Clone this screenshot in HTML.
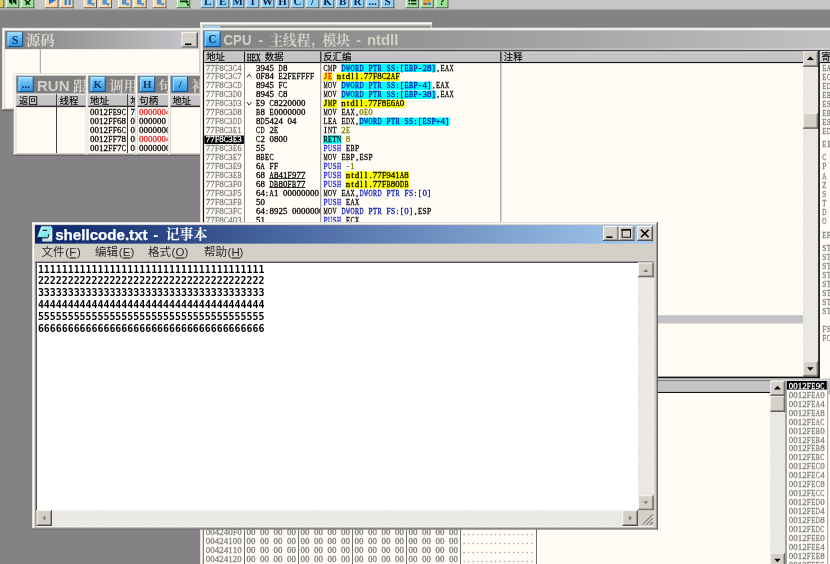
<!DOCTYPE html>
<html lang="zh-CN"><head><meta charset="utf-8"><title>OllyDbg - shellcode.txt</title>
<style>
html,body{margin:0;padding:0;background:#848284;overflow:hidden}
svg{display:block}
text{white-space:pre}
.t{font-family:"Liberation Serif","DejaVu Serif",serif}
.ib{font-family:"Liberation Serif","DejaVu Serif",serif;font-weight:bold}
.m{font-family:"Liberation Mono","DejaVu Sans Mono",monospace}
.mb{font-family:"DejaVu Sans Mono","Liberation Mono",monospace;font-weight:bold}
.s{font-family:"Liberation Sans","Noto Sans CJK SC",sans-serif}
.sb{font-family:"Liberation Sans","Noto Sans CJK SC",sans-serif;font-weight:bold}
.cs{font-family:"Liberation Serif","Noto Serif CJK SC",serif;font-weight:bold}
.ch{font-family:"Liberation Sans","Noto Sans CJK SC",sans-serif;stroke:#000;stroke-width:0.1px}
.cg{font-family:"Liberation Sans","Noto Sans CJK SC",sans-serif}
</style></head><body>
<svg width="830" height="564" viewBox="0 0 830 564">
<defs>
<linearGradient id="ic" x1="0" y1="0" x2="0" y2="1"><stop offset="0" stop-color="#9adcff"/><stop offset="0.5" stop-color="#58b4f0"/><stop offset="1" stop-color="#2f8fd8"/></linearGradient>
<linearGradient id="gs" x1="5" x2="199" y1="0" y2="0" gradientUnits="userSpaceOnUse"><stop offset="0" stop-color="#808080"/><stop offset="1" stop-color="#c8c8cc"/></linearGradient>
<linearGradient id="gc" x1="203" x2="860" y1="0" y2="0" gradientUnits="userSpaceOnUse"><stop offset="0" stop-color="#808080"/><stop offset="1" stop-color="#c4c4c4"/></linearGradient>
<linearGradient id="np" x1="0" y1="0" x2="1" y2="1"><stop offset="0" stop-color="#d8ffff"/><stop offset="0.5" stop-color="#8ceef0"/><stop offset="1" stop-color="#5cdce4"/></linearGradient>
<linearGradient id="gn" x1="35" x2="654" y1="0" y2="0" gradientUnits="userSpaceOnUse"><stop offset="0" stop-color="#0a246a"/><stop offset="1" stop-color="#a6caf0"/></linearGradient>
<pattern id="dith" width="1.49" height="1.49" patternUnits="userSpaceOnUse"><rect width="1.49" height="1.49" fill="#dbd8d1"/><rect width="0.745" height="0.745" fill="#f8f7f5"/><rect x="0.745" y="0.745" width="0.745" height="0.745" fill="#f8f7f5"/></pattern>
<pattern id="dith2" width="1.49" height="1.49" patternUnits="userSpaceOnUse"><rect width="1.49" height="1.49" fill="#dcd9d2"/><rect width="0.745" height="0.745" fill="#f9f8f6"/><rect x="0.745" y="0.745" width="0.745" height="0.745" fill="#f9f8f6"/></pattern>
<filter id="soft" x="0" y="0" width="1" height="1" filterUnits="objectBoundingBox" color-interpolation-filters="sRGB"><feGaussianBlur stdDeviation="0.35"/></filter>
</defs>
<g filter="url(#soft)">
<rect x="0" y="0" width="830" height="564" fill="#848284"/>
<rect x="0" y="0" width="830" height="9.4" fill="#c6c6c6"/>
<rect x="0" y="9" width="830" height="0.8" fill="#a8a8a8"/>
<rect x="0" y="9.8" width="830" height="0.9" fill="#8e8e8e"/>
<rect x="-9" y="0" width="13.3" height="8.2" fill="#d6d060"/>
<rect x="-9" y="0" width="0.9" height="7.4" fill="#fff"/>
<rect x="-9" y="7.3" width="13.3" height="0.9" fill="#505050"/>
<rect x="3.4" y="0" width="0.9" height="8.2" fill="#505050"/>
<rect x="6" y="0" width="13.3" height="8.2" fill="#9ee29a"/>
<rect x="6" y="0" width="0.9" height="7.4" fill="#fff"/>
<rect x="6" y="7.3" width="13.3" height="0.9" fill="#505050"/>
<rect x="18.4" y="0" width="0.9" height="8.2" fill="#505050"/>
<rect x="21" y="0" width="13.3" height="8.2" fill="#9ee29a"/>
<rect x="21" y="0" width="0.9" height="7.4" fill="#fff"/>
<rect x="21" y="7.3" width="13.3" height="0.9" fill="#505050"/>
<rect x="33.4" y="0" width="0.9" height="8.2" fill="#505050"/>
<path d="M9 0 L9 2 L12.4 5 L12.4 0 Z M13 0 L13 2 L16.4 5 L16.4 0 Z" fill="#0a280a"/>
<path d="M25 0 L29.6 4.6 M30.4 0 L25.6 4.6" stroke="#0a280a" stroke-width="1.5"/>
<rect x="45.2" y="0" width="13.3" height="8.2" fill="#f8d8a8"/>
<rect x="45.2" y="0" width="0.9" height="7.4" fill="#fff"/>
<rect x="45.2" y="7.3" width="13.3" height="0.9" fill="#505050"/>
<rect x="57.6" y="0" width="0.9" height="8.2" fill="#505050"/>
<rect x="60.2" y="0" width="13.3" height="8.2" fill="#f8d8a8"/>
<rect x="60.2" y="0" width="0.9" height="7.4" fill="#fff"/>
<rect x="60.2" y="7.3" width="13.3" height="0.9" fill="#505050"/>
<rect x="72.6" y="0" width="0.9" height="8.2" fill="#505050"/>
<rect x="83.7" y="0" width="13.3" height="8.2" fill="#f8d8a8"/>
<rect x="83.7" y="0" width="0.9" height="7.4" fill="#fff"/>
<rect x="83.7" y="7.3" width="13.3" height="0.9" fill="#505050"/>
<rect x="96.1" y="0" width="0.9" height="8.2" fill="#505050"/>
<rect x="98.7" y="0" width="13.3" height="8.2" fill="#f8d8a8"/>
<rect x="98.7" y="0" width="0.9" height="7.4" fill="#fff"/>
<rect x="98.7" y="7.3" width="13.3" height="0.9" fill="#505050"/>
<rect x="111.1" y="0" width="0.9" height="8.2" fill="#505050"/>
<rect x="118.2" y="0" width="13.3" height="8.2" fill="#f8d8a8"/>
<rect x="118.2" y="0" width="0.9" height="7.4" fill="#fff"/>
<rect x="118.2" y="7.3" width="13.3" height="0.9" fill="#505050"/>
<rect x="130.6" y="0" width="0.9" height="8.2" fill="#505050"/>
<rect x="133.3" y="0" width="13.3" height="8.2" fill="#f8d8a8"/>
<rect x="133.3" y="0" width="0.9" height="7.4" fill="#fff"/>
<rect x="133.3" y="7.3" width="13.3" height="0.9" fill="#505050"/>
<rect x="145.7" y="0" width="0.9" height="8.2" fill="#505050"/>
<rect x="153.1" y="0" width="13.3" height="8.2" fill="#f8d8a8"/>
<rect x="153.1" y="0" width="0.9" height="7.4" fill="#fff"/>
<rect x="153.1" y="7.3" width="13.3" height="0.9" fill="#505050"/>
<rect x="165.5" y="0" width="0.9" height="8.2" fill="#505050"/>
<path d="M49 0 L49 4.2 L55.6 0.4 L55.6 0 Z" fill="#1a78d8"/>
<path d="M64.6 0 h2.2 v5 h-2.2 Z M68.6 0 h2.2 v5 h-2.2 Z" fill="#2a86dc"/>
<path d="M87.5 0 h4.4 v3 h2.6 v2.4 h-2.6 v-1 h-4.4 Z" fill="#2f8ade" opacity="0.85"/>
<path d="M102.5 0 h4.4 v3 h2.6 v2.4 h-2.6 v-1 h-4.4 Z" fill="#2f8ade" opacity="0.85"/>
<path d="M122 0 h4.4 v3 h2.6 v2.4 h-2.6 v-1 h-4.4 Z" fill="#2f8ade" opacity="0.85"/>
<path d="M137 0 h4.4 v3 h2.6 v2.4 h-2.6 v-1 h-4.4 Z" fill="#2f8ade" opacity="0.85"/>
<path d="M157 0 h4.4 v3 h2.6 v2.4 h-2.6 v-1 h-4.4 Z" fill="#2f8ade" opacity="0.85"/>
<rect x="176.9" y="0" width="13.3" height="8.2" fill="#9ee29a"/>
<rect x="176.9" y="0" width="0.9" height="7.4" fill="#fff"/>
<rect x="176.9" y="7.3" width="13.3" height="0.9" fill="#505050"/>
<rect x="189.3" y="0" width="0.9" height="8.2" fill="#505050"/>
<path d="M180 0.4 h6 v-0.4 l3 1.6 l-3 2 v-1.4 h-6 Z M187 3.4 h1.8 v2.4 h-1.8 Z" fill="#0a280a"/>
<rect x="201" y="0" width="13.3" height="8.2" fill="#94d2f6"/>
<rect x="201" y="0" width="0.9" height="7.4" fill="#e8f8ff"/>
<rect x="201" y="7.3" width="13.3" height="0.9" fill="#505050"/>
<rect x="213.4" y="0" width="0.9" height="8.2" fill="#505050"/>
<text x="207.6" y="4.8" font-size="11" fill="#0c2448" class="ib" text-anchor="middle">L</text>
<rect x="216" y="0" width="13.3" height="8.2" fill="#94d2f6"/>
<rect x="216" y="0" width="0.9" height="7.4" fill="#e8f8ff"/>
<rect x="216" y="7.3" width="13.3" height="0.9" fill="#505050"/>
<rect x="228.4" y="0" width="0.9" height="8.2" fill="#505050"/>
<text x="222.6" y="4.8" font-size="11" fill="#0c2448" class="ib" text-anchor="middle">E</text>
<rect x="231" y="0" width="13.3" height="8.2" fill="#94d2f6"/>
<rect x="231" y="0" width="0.9" height="7.4" fill="#e8f8ff"/>
<rect x="231" y="7.3" width="13.3" height="0.9" fill="#505050"/>
<rect x="243.4" y="0" width="0.9" height="8.2" fill="#505050"/>
<text x="237.6" y="4.8" font-size="11" fill="#0c2448" class="ib" text-anchor="middle">M</text>
<rect x="246" y="0" width="13.3" height="8.2" fill="#94d2f6"/>
<rect x="246" y="0" width="0.9" height="7.4" fill="#e8f8ff"/>
<rect x="246" y="7.3" width="13.3" height="0.9" fill="#505050"/>
<rect x="258.4" y="0" width="0.9" height="8.2" fill="#505050"/>
<text x="252.6" y="4.8" font-size="11" fill="#0c2448" class="ib" text-anchor="middle">T</text>
<rect x="261" y="0" width="13.3" height="8.2" fill="#94d2f6"/>
<rect x="261" y="0" width="0.9" height="7.4" fill="#e8f8ff"/>
<rect x="261" y="7.3" width="13.3" height="0.9" fill="#505050"/>
<rect x="273.4" y="0" width="0.9" height="8.2" fill="#505050"/>
<text x="267.6" y="4.8" font-size="11" fill="#0c2448" class="ib" text-anchor="middle">W</text>
<rect x="276" y="0" width="13.3" height="8.2" fill="#94d2f6"/>
<rect x="276" y="0" width="0.9" height="7.4" fill="#e8f8ff"/>
<rect x="276" y="7.3" width="13.3" height="0.9" fill="#505050"/>
<rect x="288.4" y="0" width="0.9" height="8.2" fill="#505050"/>
<text x="282.6" y="4.8" font-size="11" fill="#0c2448" class="ib" text-anchor="middle">H</text>
<rect x="291" y="0" width="13.3" height="8.2" fill="#94d2f6"/>
<rect x="291" y="0" width="0.9" height="7.4" fill="#e8f8ff"/>
<rect x="291" y="7.3" width="13.3" height="0.9" fill="#505050"/>
<rect x="303.4" y="0" width="0.9" height="8.2" fill="#505050"/>
<text x="297.6" y="4.8" font-size="11" fill="#0c2448" class="ib" text-anchor="middle">C</text>
<rect x="306" y="0" width="13.3" height="8.2" fill="#94d2f6"/>
<rect x="306" y="0" width="0.9" height="7.4" fill="#e8f8ff"/>
<rect x="306" y="7.3" width="13.3" height="0.9" fill="#505050"/>
<rect x="318.4" y="0" width="0.9" height="8.2" fill="#505050"/>
<text x="312.6" y="4.8" font-size="11" fill="#0c2448" class="ib" text-anchor="middle">/</text>
<rect x="321" y="0" width="13.3" height="8.2" fill="#94d2f6"/>
<rect x="321" y="0" width="0.9" height="7.4" fill="#e8f8ff"/>
<rect x="321" y="7.3" width="13.3" height="0.9" fill="#505050"/>
<rect x="333.4" y="0" width="0.9" height="8.2" fill="#505050"/>
<text x="327.6" y="4.8" font-size="11" fill="#0c2448" class="ib" text-anchor="middle">K</text>
<rect x="336" y="0" width="13.3" height="8.2" fill="#94d2f6"/>
<rect x="336" y="0" width="0.9" height="7.4" fill="#e8f8ff"/>
<rect x="336" y="7.3" width="13.3" height="0.9" fill="#505050"/>
<rect x="348.4" y="0" width="0.9" height="8.2" fill="#505050"/>
<text x="342.6" y="4.8" font-size="11" fill="#0c2448" class="ib" text-anchor="middle">B</text>
<rect x="351" y="0" width="13.3" height="8.2" fill="#94d2f6"/>
<rect x="351" y="0" width="0.9" height="7.4" fill="#e8f8ff"/>
<rect x="351" y="7.3" width="13.3" height="0.9" fill="#505050"/>
<rect x="363.4" y="0" width="0.9" height="8.2" fill="#505050"/>
<text x="357.6" y="4.8" font-size="11" fill="#0c2448" class="ib" text-anchor="middle">R</text>
<rect x="366" y="0" width="13.3" height="8.2" fill="#94d2f6"/>
<rect x="366" y="0" width="0.9" height="7.4" fill="#e8f8ff"/>
<rect x="366" y="7.3" width="13.3" height="0.9" fill="#505050"/>
<rect x="378.4" y="0" width="0.9" height="8.2" fill="#505050"/>
<text x="372.6" y="4.8" font-size="11" fill="#0c2448" class="ib" text-anchor="middle">...</text>
<rect x="381" y="0" width="13.3" height="8.2" fill="#94d2f6"/>
<rect x="381" y="0" width="0.9" height="7.4" fill="#e8f8ff"/>
<rect x="381" y="7.3" width="13.3" height="0.9" fill="#505050"/>
<rect x="393.4" y="0" width="0.9" height="8.2" fill="#505050"/>
<text x="387.6" y="4.8" font-size="11" fill="#0c2448" class="ib" text-anchor="middle">S</text>
<rect x="405.8" y="0" width="13" height="8.2" fill="#9ee29a"/>
<rect x="405.8" y="0" width="0.9" height="7.4" fill="#fff"/>
<rect x="405.8" y="7.3" width="13" height="0.9" fill="#505050"/>
<rect x="417.9" y="0" width="0.9" height="8.2" fill="#505050"/>
<rect x="420.7" y="0" width="13" height="8.2" fill="#9ee29a"/>
<rect x="420.7" y="0" width="0.9" height="7.4" fill="#fff"/>
<rect x="420.7" y="7.3" width="13" height="0.9" fill="#505050"/>
<rect x="432.8" y="0" width="0.9" height="8.2" fill="#505050"/>
<rect x="435.4" y="0" width="13" height="8.2" fill="#9ee29a"/>
<rect x="435.4" y="0" width="0.9" height="7.4" fill="#fff"/>
<rect x="435.4" y="7.3" width="13" height="0.9" fill="#505050"/>
<rect x="447.5" y="0" width="0.9" height="8.2" fill="#505050"/>
<path d="M408.4 0 h1.8 v1.4 h-1.8 Z M411 0 h5.4 v1.4 h-5.4 Z M408.4 3 h1.8 v1.6 h-1.8 Z M411 3 h5.4 v1.6 h-5.4 Z" fill="#0a280a"/>
<path d="M423.4 0 h7.6 v2 h-7.6 Z" fill="#e8a040"/><path d="M423.4 2.6 h3.4 v2.4 h-3.4 Z" fill="#d04030"/><path d="M427.4 2.6 h3.6 v2.4 h-3.6 Z" fill="#4080d0"/>
<text x="441.9" y="4.9" font-size="11" fill="#0a280a" class="ib" text-anchor="middle">?</text>
<rect x="2" y="27.8" width="215" height="83" fill="#d4d0c8"/>
<rect x="2.7" y="28.5" width="213.6" height="1.4" fill="#fbfbfb"/>
<rect x="2.7" y="28.5" width="1.4" height="81.6" fill="#fbfbfb"/>
<rect x="2" y="110" width="215" height="0.8" fill="#404040"/>
<rect x="216.2" y="27.8" width="0.8" height="83" fill="#404040"/>
<rect x="2.8" y="109.2" width="213.4" height="0.8" fill="#808080"/>
<rect x="215.4" y="28.6" width="0.8" height="81.4" fill="#808080"/>
<rect x="5" y="31" width="194" height="18.3" fill="url(#gs)"/>
<rect x="7" y="32" width="16" height="15" rx="1" fill="url(#ic)" stroke="#2a7fc0" stroke-width="0.6"/>
<rect x="7.6" y="32.6" width="14.8" height="0.9" fill="#c8ecff"/>
<rect x="7.6" y="32.6" width="0.9" height="13.8" fill="#a8dcff"/>
<rect x="7.3" y="46" width="15.7" height="1" fill="#1c5088"/>
<rect x="22" y="32.3" width="1" height="14.7" fill="#1c5088"/>
<text x="15" y="43.82" font-size="12" fill="#123a68" class="ib" text-anchor="middle">S</text>
<text x="26" y="45.4" font-size="13.6" fill="#dcd8d0" class="cs" textLength="28.6" lengthAdjust="spacingAndGlyphs">源码</text>
<rect x="181.6" y="32.3" width="16.2" height="15.2" fill="#d4d0c8"/>
<rect x="181.6" y="32.3" width="16.2" height="0.8" fill="#fff"/>
<rect x="181.6" y="32.3" width="0.8" height="15.2" fill="#fff"/>
<rect x="181.6" y="46.7" width="16.2" height="0.8" fill="#404040"/>
<rect x="197" y="32.3" width="0.8" height="15.2" fill="#404040"/>
<rect x="182.4" y="45.9" width="14.6" height="0.8" fill="#808080"/>
<rect x="196.2" y="33.1" width="0.8" height="13.6" fill="#808080"/>
<rect x="185" y="43.5" width="6.4" height="1.6" fill="#000"/>
<rect x="5" y="49.3" width="194" height="58.8" fill="#fffcf6"/>
<rect x="39.8" y="49.3" width="1" height="58.8" fill="#a0a0a0"/>
<rect x="13.5" y="73" width="90" height="83" fill="#d4d0c8"/>
<rect x="14.2" y="73.7" width="88.6" height="1.4" fill="#fbfbfb"/>
<rect x="14.2" y="73.7" width="1.4" height="81.6" fill="#fbfbfb"/>
<rect x="13.5" y="155.2" width="90" height="0.8" fill="#404040"/>
<rect x="102.7" y="73" width="0.8" height="83" fill="#404040"/>
<rect x="14.3" y="154.4" width="88.4" height="0.8" fill="#808080"/>
<rect x="101.9" y="73.8" width="0.8" height="81.4" fill="#808080"/>
<rect x="16.2" y="75.9" width="84.8" height="17.8" fill="#808080"/>
<rect x="18.1" y="76.6" width="15.6" height="15.4" rx="1" fill="url(#ic)" stroke="#2a7fc0" stroke-width="0.6"/>
<rect x="18.7" y="77.2" width="14.4" height="0.9" fill="#c8ecff"/>
<rect x="18.7" y="77.2" width="0.9" height="14.2" fill="#a8dcff"/>
<rect x="18.4" y="91" width="15.3" height="1" fill="#1c5088"/>
<rect x="32.7" y="76.9" width="1" height="15.1" fill="#1c5088"/>
<text x="25.9" y="88.26" font-size="11" fill="#123a68" class="ib" text-anchor="middle">...</text>
<g clip-path="url(#c13)">
<clipPath id="c13"><rect x="16.2" y="73" width="84.8" height="82"/></clipPath>
<text x="37" y="90.6" font-size="15" fill="#d4d0c8" class="sb">RUN</text>
<text x="73" y="90.6" font-size="14" fill="#d4d0c8" class="cs">跟</text>
<rect x="16.2" y="93.7" width="84.8" height="12.5" fill="#c6c3c6"/>
<rect x="16.2" y="93.7" width="84.8" height="1.6" fill="#e4e2e4"/>
<rect x="16.2" y="106.9" width="84.8" height="46.1" fill="#fffcf6"/>
<rect x="16.2" y="105.6" width="84.8" height="1.5" fill="#303030"/>
<text x="19" y="104.3" font-size="9.4" fill="#000" class="ch">返回</text>
<text x="59.5" y="104.3" font-size="9.4" fill="#000" class="ch">线程</text>
<rect x="56" y="94.2" width="1" height="58.8" fill="#404040"/>
</g>
<rect x="85.5" y="73" width="70" height="83" fill="#d4d0c8"/>
<rect x="86.2" y="73.7" width="68.6" height="1.4" fill="#fbfbfb"/>
<rect x="86.2" y="73.7" width="1.4" height="81.6" fill="#fbfbfb"/>
<rect x="85.5" y="155.2" width="70" height="0.8" fill="#404040"/>
<rect x="154.7" y="73" width="0.8" height="83" fill="#404040"/>
<rect x="86.3" y="154.4" width="68.4" height="0.8" fill="#808080"/>
<rect x="153.9" y="73.8" width="0.8" height="81.4" fill="#808080"/>
<rect x="88.2" y="75.9" width="64.8" height="17.8" fill="#808080"/>
<rect x="90.1" y="76.6" width="15.6" height="15.4" rx="1" fill="url(#ic)" stroke="#2a7fc0" stroke-width="0.6"/>
<rect x="90.7" y="77.2" width="14.4" height="0.9" fill="#c8ecff"/>
<rect x="90.7" y="77.2" width="0.9" height="14.2" fill="#a8dcff"/>
<rect x="90.4" y="91" width="15.3" height="1" fill="#1c5088"/>
<rect x="104.7" y="76.9" width="1" height="15.1" fill="#1c5088"/>
<text x="97.9" y="88.26" font-size="11" fill="#123a68" class="ib" text-anchor="middle">K</text>
<g clip-path="url(#c85)">
<clipPath id="c85"><rect x="88.2" y="73" width="64.8" height="82"/></clipPath>
<text x="109.5" y="90.6" font-size="14" fill="#d4d0c8" class="cs">调用</text>
<rect x="88.2" y="93.7" width="64.8" height="12.5" fill="#c6c3c6"/>
<rect x="88.2" y="93.7" width="64.8" height="1.6" fill="#e4e2e4"/>
<rect x="88.2" y="106.9" width="64.8" height="46.1" fill="#fffcf6"/>
<rect x="88.2" y="105.6" width="64.8" height="1.5" fill="#303030"/>
<text x="90" y="104.3" font-size="9.4" fill="#000" class="ch">地址</text>
<text x="130.5" y="104.3" font-size="9.4" fill="#000" class="ch">堆</text>
<rect x="127" y="94.2" width="1" height="58.8" fill="#404040"/>
</g>
<rect x="135" y="73" width="50" height="83" fill="#d4d0c8"/>
<rect x="135.7" y="73.7" width="48.6" height="1.4" fill="#fbfbfb"/>
<rect x="135.7" y="73.7" width="1.4" height="81.6" fill="#fbfbfb"/>
<rect x="135" y="155.2" width="50" height="0.8" fill="#404040"/>
<rect x="184.2" y="73" width="0.8" height="83" fill="#404040"/>
<rect x="135.8" y="154.4" width="48.4" height="0.8" fill="#808080"/>
<rect x="183.4" y="73.8" width="0.8" height="81.4" fill="#808080"/>
<rect x="137.7" y="75.9" width="44.8" height="17.8" fill="#808080"/>
<rect x="139.6" y="76.6" width="15.6" height="15.4" rx="1" fill="url(#ic)" stroke="#2a7fc0" stroke-width="0.6"/>
<rect x="140.2" y="77.2" width="14.4" height="0.9" fill="#c8ecff"/>
<rect x="140.2" y="77.2" width="0.9" height="14.2" fill="#a8dcff"/>
<rect x="139.9" y="91" width="15.3" height="1" fill="#1c5088"/>
<rect x="154.2" y="76.9" width="1" height="15.1" fill="#1c5088"/>
<text x="147.4" y="88.26" font-size="11" fill="#123a68" class="ib" text-anchor="middle">H</text>
<g clip-path="url(#c135)">
<clipPath id="c135"><rect x="137.7" y="73" width="44.8" height="82"/></clipPath>
<text x="158" y="90.6" font-size="14" fill="#d4d0c8" class="cs">句</text>
<rect x="137.7" y="93.7" width="44.8" height="12.5" fill="#c6c3c6"/>
<rect x="137.7" y="93.7" width="44.8" height="1.6" fill="#e4e2e4"/>
<rect x="137.7" y="106.9" width="44.8" height="46.1" fill="#fffcf6"/>
<rect x="137.7" y="105.6" width="44.8" height="1.5" fill="#303030"/>
<text x="139.3" y="104.3" font-size="9.4" fill="#000" class="ch">句柄</text>
</g>
<rect x="167.8" y="73" width="50" height="83" fill="#d4d0c8"/>
<rect x="168.5" y="73.7" width="48.6" height="1.4" fill="#fbfbfb"/>
<rect x="168.5" y="73.7" width="1.4" height="81.6" fill="#fbfbfb"/>
<rect x="167.8" y="155.2" width="50" height="0.8" fill="#404040"/>
<rect x="217" y="73" width="0.8" height="83" fill="#404040"/>
<rect x="168.6" y="154.4" width="48.4" height="0.8" fill="#808080"/>
<rect x="216.2" y="73.8" width="0.8" height="81.4" fill="#808080"/>
<rect x="170.5" y="75.9" width="44.8" height="17.8" fill="#808080"/>
<rect x="172.4" y="76.6" width="15.6" height="15.4" rx="1" fill="url(#ic)" stroke="#2a7fc0" stroke-width="0.6"/>
<rect x="173" y="77.2" width="14.4" height="0.9" fill="#c8ecff"/>
<rect x="173" y="77.2" width="0.9" height="14.2" fill="#a8dcff"/>
<rect x="172.7" y="91" width="15.3" height="1" fill="#1c5088"/>
<rect x="187" y="76.9" width="1" height="15.1" fill="#1c5088"/>
<text x="180.2" y="88.26" font-size="11" fill="#123a68" class="ib" text-anchor="middle">/</text>
<g clip-path="url(#c167)">
<clipPath id="c167"><rect x="170.5" y="73" width="44.8" height="82"/></clipPath>
<text x="191.2" y="90.6" font-size="14" fill="#d4d0c8" class="cs">补</text>
<rect x="170.5" y="93.7" width="44.8" height="12.5" fill="#c6c3c6"/>
<rect x="170.5" y="93.7" width="44.8" height="1.6" fill="#e4e2e4"/>
<rect x="170.5" y="106.9" width="44.8" height="46.1" fill="#fffcf6"/>
<rect x="170.5" y="105.6" width="44.8" height="1.5" fill="#303030"/>
<text x="172.4" y="104.3" font-size="9.4" fill="#000" class="ch">地址</text>
</g>
<text y="114.9" font-size="8.9" fill="#000" class="t" text-anchor="middle" stroke="#000" stroke-width="0.28"><tspan x="92.2 96.7 101.2 105.7">0012</tspan><tspan x="110.2" textLength="4.12" lengthAdjust="spacingAndGlyphs">F</tspan><tspan x="114.7" textLength="4.12" lengthAdjust="spacingAndGlyphs">E</tspan><tspan x="119.2">9</tspan><tspan x="123.7" textLength="4.12" lengthAdjust="spacingAndGlyphs">C</tspan></text>
<text y="114.9" font-size="8.9" fill="#000" class="t" text-anchor="middle" stroke="#000" stroke-width="0.28"><tspan x="132.6">7</tspan></text>
<text y="123.87" font-size="8.9" fill="#000" class="t" text-anchor="middle" stroke="#000" stroke-width="0.28"><tspan x="92.2 96.7 101.2 105.7">0012</tspan><tspan x="110.2" textLength="4.12" lengthAdjust="spacingAndGlyphs">F</tspan><tspan x="114.7" textLength="4.12" lengthAdjust="spacingAndGlyphs">F</tspan><tspan x="119.2 123.7">68</tspan></text>
<text y="123.87" font-size="8.9" fill="#000" class="t" text-anchor="middle" stroke="#000" stroke-width="0.28"><tspan x="132.6">0</tspan></text>
<text y="132.84" font-size="8.9" fill="#000" class="t" text-anchor="middle" stroke="#000" stroke-width="0.28"><tspan x="92.2 96.7 101.2 105.7">0012</tspan><tspan x="110.2" textLength="4.12" lengthAdjust="spacingAndGlyphs">F</tspan><tspan x="114.7" textLength="4.12" lengthAdjust="spacingAndGlyphs">F</tspan><tspan x="119.2">6</tspan><tspan x="123.7" textLength="4.12" lengthAdjust="spacingAndGlyphs">C</tspan></text>
<text y="132.84" font-size="8.9" fill="#000" class="t" text-anchor="middle" stroke="#000" stroke-width="0.28"><tspan x="132.6">0</tspan></text>
<text y="141.81" font-size="8.9" fill="#000" class="t" text-anchor="middle" stroke="#000" stroke-width="0.28"><tspan x="92.2 96.7 101.2 105.7">0012</tspan><tspan x="110.2" textLength="4.12" lengthAdjust="spacingAndGlyphs">F</tspan><tspan x="114.7" textLength="4.12" lengthAdjust="spacingAndGlyphs">F</tspan><tspan x="119.2 123.7">78</tspan></text>
<text y="141.81" font-size="8.9" fill="#000" class="t" text-anchor="middle" stroke="#000" stroke-width="0.28"><tspan x="132.6">0</tspan></text>
<text y="150.78" font-size="8.9" fill="#000" class="t" text-anchor="middle" stroke="#000" stroke-width="0.28"><tspan x="92.2 96.7 101.2 105.7">0012</tspan><tspan x="110.2" textLength="4.12" lengthAdjust="spacingAndGlyphs">F</tspan><tspan x="114.7" textLength="4.12" lengthAdjust="spacingAndGlyphs">F</tspan><tspan x="119.2">7</tspan><tspan x="123.7" textLength="4.12" lengthAdjust="spacingAndGlyphs">C</tspan></text>
<text y="150.78" font-size="8.9" fill="#000" class="t" text-anchor="middle" stroke="#000" stroke-width="0.28"><tspan x="132.6">0</tspan></text>
<clipPath id="ch1"><rect x="137.7" y="100" width="30" height="60"/></clipPath><g clip-path="url(#ch1)">
<text y="114.9" font-size="8.9" fill="#e02020" class="t" text-anchor="middle" stroke="#e02020" stroke-width="0.28"><tspan x="141.3 145.8 150.3 154.8 159.3 163.8 168.3">0000004</tspan></text>
<text y="123.87" font-size="8.9" fill="#000" class="t" text-anchor="middle" stroke="#000" stroke-width="0.28"><tspan x="141.3 145.8 150.3 154.8 159.3 163.8">000000</tspan></text>
<text y="132.84" font-size="8.9" fill="#000" class="t" text-anchor="middle" stroke="#000" stroke-width="0.28"><tspan x="141.3 145.8 150.3 154.8 159.3 163.8 168.3 172.8">00000003</tspan></text>
<text y="141.81" font-size="8.9" fill="#e02020" class="t" text-anchor="middle" stroke="#e02020" stroke-width="0.28"><tspan x="141.3 145.8 150.3 154.8 159.3 163.8 168.3">0000004</tspan></text>
<text y="150.78" font-size="8.9" fill="#000" class="t" text-anchor="middle" stroke="#000" stroke-width="0.28"><tspan x="141.3 145.8 150.3 154.8 159.3 163.8 168.3 172.8">00000000</tspan></text>
</g>
<rect x="200" y="22" width="233.5" height="10" fill="#d4d0c8"/>
<rect x="200.7" y="22.7" width="232.1" height="1.4" fill="#fbfbfb"/>
<rect x="200.7" y="22.7" width="1.4" height="8.6" fill="#fbfbfb"/>
<rect x="200" y="31.2" width="233.5" height="0.8" fill="#404040"/>
<rect x="432.7" y="22" width="0.8" height="10" fill="#404040"/>
<rect x="200.8" y="30.4" width="231.9" height="0.8" fill="#808080"/>
<rect x="431.9" y="22.8" width="0.8" height="8.4" fill="#808080"/>
<rect x="203" y="25.6" width="227.6" height="3" fill="#8a8a8a"/>
<rect x="204" y="26" width="16.5" height="2" fill="#94d0f4"/>
<rect x="200" y="27.6" width="700" height="600" fill="#d4d0c8"/>
<rect x="200.7" y="28.3" width="698.6" height="1.4" fill="#fbfbfb"/>
<rect x="200.7" y="28.3" width="1.4" height="598.6" fill="#fbfbfb"/>
<rect x="200" y="626.8" width="700" height="0.8" fill="#404040"/>
<rect x="899.2" y="27.6" width="0.8" height="600" fill="#404040"/>
<rect x="200.8" y="626" width="698.4" height="0.8" fill="#808080"/>
<rect x="898.4" y="28.4" width="0.8" height="598.4" fill="#808080"/>
<rect x="203" y="30.5" width="640" height="17.6" fill="url(#gc)"/>
<rect x="204.4" y="31" width="16.2" height="16" rx="1" fill="url(#ic)" stroke="#2a7fc0" stroke-width="0.6"/>
<rect x="205" y="31.6" width="15" height="0.9" fill="#c8ecff"/>
<rect x="205" y="31.6" width="0.9" height="14.8" fill="#a8dcff"/>
<rect x="204.7" y="46" width="15.9" height="1" fill="#1c5088"/>
<rect x="219.6" y="31.3" width="1" height="15.7" fill="#1c5088"/>
<text x="212.5" y="43.176" font-size="11.6" fill="#123a68" class="ib" text-anchor="middle">C</text>
<text y="44.5" font-size="14.2" fill="#d4d0c8" class="sb"><tspan x="223.6" textLength="27.8" lengthAdjust="spacingAndGlyphs">CPU</tspan><tspan x="254.3"> - </tspan><tspan x="269.4" class="cs" font-size="13.8" textLength="41" lengthAdjust="spacingAndGlyphs">主线程</tspan><tspan x="311.3">, </tspan><tspan x="322.4" class="cs" font-size="13.8" textLength="27.6" lengthAdjust="spacingAndGlyphs">模块</tspan><tspan x="352.4"> - </tspan><tspan x="367" textLength="31.3" lengthAdjust="spacingAndGlyphs">ntdll</tspan></text>
<rect x="203" y="48" width="640" height="2.6" fill="url(#gc)"/>
<rect x="203" y="48" width="640" height="2.6" fill="#fff" opacity="0.22"/>
<rect x="203" y="50.5" width="627" height="520" fill="#fffcf6"/>
<rect x="203" y="50.3" width="617" height="1.4" fill="#101010"/>
<rect x="203" y="50.3" width="1.1" height="328" fill="#101010"/>
<rect x="204.1" y="51.7" width="598.9" height="10.4" fill="#c6c3c6"/>
<rect x="204.1" y="51.6" width="598.9" height="0.7" fill="#f0f0f0"/>
<rect x="204.5" y="62" width="598.5" height="1.1" fill="#101010"/>
<rect x="244" y="51.7" width="0.9" height="325" fill="#808080"/>
<rect x="244" y="51.7" width="1" height="10.5" fill="#202020"/>
<rect x="320.3" y="51.7" width="0.9" height="325" fill="#808080"/>
<rect x="320.3" y="51.7" width="1" height="10.5" fill="#202020"/>
<rect x="500.4" y="51.7" width="0.9" height="325" fill="#808080"/>
<rect x="500.4" y="51.7" width="1" height="10.5" fill="#202020"/>
<text x="206.2" y="60.2" font-size="9.4" fill="#000" class="ch">地址</text>
<text y="60.7" font-size="9.6" fill="#000" class="t" text-anchor="middle" stroke="#000" stroke-width="0.28"><tspan x="249.3" textLength="4.44" lengthAdjust="spacingAndGlyphs">H</tspan><tspan x="253.8" textLength="4.44" lengthAdjust="spacingAndGlyphs">E</tspan><tspan x="258.3" textLength="4.44" lengthAdjust="spacingAndGlyphs">X</tspan></text>
<text x="264.8" y="60.2" font-size="9.4" fill="#000" class="ch">数据</text>
<text x="323.2" y="60.2" font-size="9.4" fill="#000" class="ch">反汇编</text>
<text x="503.8" y="60.2" font-size="9.4" fill="#000" class="ch">注释</text>
<clipPath id="hx"><rect x="245" y="62" width="75.3" height="170"/></clipPath>
<text y="70.5" font-size="8.9" fill="#808080" class="t" text-anchor="middle" stroke="#808080" stroke-width="0.28"><tspan x="208.0 212.5">77</tspan><tspan x="217.0" textLength="4.12" lengthAdjust="spacingAndGlyphs">F</tspan><tspan x="221.5">8</tspan><tspan x="226.0" textLength="4.12" lengthAdjust="spacingAndGlyphs">C</tspan><tspan x="230.5">3</tspan><tspan x="235.0" textLength="4.12" lengthAdjust="spacingAndGlyphs">C</tspan><tspan x="239.5">4</tspan></text>
<g clip-path="url(#hx)">
<text y="70.5" font-size="8.9" fill="#000" class="t" text-anchor="middle" stroke="#000" stroke-width="0.28"><tspan x="258.1 262.6 267.1 271.6 276.1">3945 </tspan><tspan x="280.6" textLength="4.12" lengthAdjust="spacingAndGlyphs">D</tspan><tspan x="285.1">8</tspan></text>
</g>
<text y="70.5" font-size="8.9" fill="#000" class="t" text-anchor="middle" stroke="#000" stroke-width="0.28"><tspan x="325.5" textLength="4.12" lengthAdjust="spacingAndGlyphs">C</tspan><tspan x="330.0" textLength="4.12" lengthAdjust="spacingAndGlyphs">M</tspan><tspan x="334.5" textLength="4.12" lengthAdjust="spacingAndGlyphs">P</tspan><tspan x="339.0"> </tspan></text>
<rect x="340.92" y="63.8" width="95.205" height="8.2" fill="#00ffff"/>
<text y="70.5" font-size="8.9" fill="#0010a8" class="t" text-anchor="middle" stroke="#0010a8" stroke-width="0.28"><tspan x="343.5" textLength="4.12" lengthAdjust="spacingAndGlyphs">D</tspan><tspan x="348.0" textLength="4.12" lengthAdjust="spacingAndGlyphs">W</tspan><tspan x="352.5" textLength="4.12" lengthAdjust="spacingAndGlyphs">O</tspan><tspan x="357.0" textLength="4.12" lengthAdjust="spacingAndGlyphs">R</tspan><tspan x="361.5" textLength="4.12" lengthAdjust="spacingAndGlyphs">D</tspan><tspan x="366.0"> </tspan><tspan x="370.5" textLength="4.12" lengthAdjust="spacingAndGlyphs">P</tspan><tspan x="375.0" textLength="4.12" lengthAdjust="spacingAndGlyphs">T</tspan><tspan x="379.5" textLength="4.12" lengthAdjust="spacingAndGlyphs">R</tspan><tspan x="384.0"> </tspan><tspan x="388.5" textLength="4.12" lengthAdjust="spacingAndGlyphs">S</tspan><tspan x="393.0" textLength="4.12" lengthAdjust="spacingAndGlyphs">S</tspan><tspan x="397.5 402.0">:[</tspan><tspan x="406.5" textLength="4.12" lengthAdjust="spacingAndGlyphs">E</tspan><tspan x="411.0" textLength="4.12" lengthAdjust="spacingAndGlyphs">B</tspan><tspan x="415.6" textLength="4.12" lengthAdjust="spacingAndGlyphs">P</tspan><tspan x="420.1 424.6 429.1 433.6">-28]</tspan></text>
<text y="70.5" font-size="8.9" fill="#000" class="t" text-anchor="middle" stroke="#000" stroke-width="0.28"><tspan x="438.1">,</tspan><tspan x="442.6" textLength="4.12" lengthAdjust="spacingAndGlyphs">E</tspan><tspan x="447.1" textLength="4.12" lengthAdjust="spacingAndGlyphs">A</tspan><tspan x="451.6" textLength="4.12" lengthAdjust="spacingAndGlyphs">X</tspan></text>
<text y="79.47" font-size="8.9" fill="#808080" class="t" text-anchor="middle" stroke="#808080" stroke-width="0.28"><tspan x="208.0 212.5">77</tspan><tspan x="217.0" textLength="4.12" lengthAdjust="spacingAndGlyphs">F</tspan><tspan x="221.5">8</tspan><tspan x="226.0" textLength="4.12" lengthAdjust="spacingAndGlyphs">C</tspan><tspan x="230.5">3</tspan><tspan x="235.0" textLength="4.12" lengthAdjust="spacingAndGlyphs">C</tspan><tspan x="239.5">7</tspan></text>
<path d="M247 77.37 L249.2 74.17 L251.4 77.37" stroke="#000" stroke-width="0.8" fill="none"/>
<g clip-path="url(#hx)">
<text y="79.47" font-size="8.9" fill="#000" class="t" text-anchor="middle" stroke="#000" stroke-width="0.28"><tspan x="258.1">0</tspan><tspan x="262.6" textLength="4.12" lengthAdjust="spacingAndGlyphs">F</tspan><tspan x="267.1 271.6 276.1">84 </tspan><tspan x="280.6" textLength="4.12" lengthAdjust="spacingAndGlyphs">E</tspan><tspan x="285.1">2</tspan><tspan x="289.6" textLength="4.12" lengthAdjust="spacingAndGlyphs">F</tspan><tspan x="294.1" textLength="4.12" lengthAdjust="spacingAndGlyphs">E</tspan><tspan x="298.6" textLength="4.12" lengthAdjust="spacingAndGlyphs">F</tspan><tspan x="303.1" textLength="4.12" lengthAdjust="spacingAndGlyphs">F</tspan><tspan x="307.6" textLength="4.12" lengthAdjust="spacingAndGlyphs">F</tspan><tspan x="312.1" textLength="4.12" lengthAdjust="spacingAndGlyphs">F</tspan></text>
</g>
<rect x="322.9" y="72.77" width="9.61" height="8.2" fill="#ffff00"/>
<text y="79.47" font-size="8.9" fill="#ff0000" class="t" text-anchor="middle" stroke="#ff0000" stroke-width="0.28"><tspan x="325.5">J</tspan><tspan x="330.0" textLength="4.12" lengthAdjust="spacingAndGlyphs">E</tspan></text>
<rect x="336.415" y="72.77" width="63.67" height="8.2" fill="#ffff00"/>
<text y="79.47" font-size="8.9" fill="#000" class="t" text-anchor="middle" stroke="#000" stroke-width="0.28"><tspan x="339.0 343.5 348.0 352.5 357.0 361.5 366.0 370.5">ntdll.77</tspan><tspan x="375.0" textLength="4.12" lengthAdjust="spacingAndGlyphs">F</tspan><tspan x="379.5">8</tspan><tspan x="384.0" textLength="4.12" lengthAdjust="spacingAndGlyphs">C</tspan><tspan x="388.5">2</tspan><tspan x="393.0" textLength="4.12" lengthAdjust="spacingAndGlyphs">A</tspan><tspan x="397.5" textLength="4.12" lengthAdjust="spacingAndGlyphs">F</tspan></text>
<text y="88.44" font-size="8.9" fill="#808080" class="t" text-anchor="middle" stroke="#808080" stroke-width="0.28"><tspan x="208.0 212.5">77</tspan><tspan x="217.0" textLength="4.12" lengthAdjust="spacingAndGlyphs">F</tspan><tspan x="221.5">8</tspan><tspan x="226.0" textLength="4.12" lengthAdjust="spacingAndGlyphs">C</tspan><tspan x="230.5">3</tspan><tspan x="235.0" textLength="4.12" lengthAdjust="spacingAndGlyphs">C</tspan><tspan x="239.5" textLength="4.12" lengthAdjust="spacingAndGlyphs">D</tspan></text>
<g clip-path="url(#hx)">
<text y="88.44" font-size="8.9" fill="#000" class="t" text-anchor="middle" stroke="#000" stroke-width="0.28"><tspan x="258.1 262.6 267.1 271.6 276.1">8945 </tspan><tspan x="280.6" textLength="4.12" lengthAdjust="spacingAndGlyphs">F</tspan><tspan x="285.1" textLength="4.12" lengthAdjust="spacingAndGlyphs">C</tspan></text>
</g>
<text y="88.44" font-size="8.9" fill="#000" class="t" text-anchor="middle" stroke="#000" stroke-width="0.28"><tspan x="325.5" textLength="4.12" lengthAdjust="spacingAndGlyphs">M</tspan><tspan x="330.0" textLength="4.12" lengthAdjust="spacingAndGlyphs">O</tspan><tspan x="334.5" textLength="4.12" lengthAdjust="spacingAndGlyphs">V</tspan><tspan x="339.0"> </tspan></text>
<rect x="340.92" y="81.74" width="90.7" height="8.2" fill="#00ffff"/>
<text y="88.44" font-size="8.9" fill="#0010a8" class="t" text-anchor="middle" stroke="#0010a8" stroke-width="0.28"><tspan x="343.5" textLength="4.12" lengthAdjust="spacingAndGlyphs">D</tspan><tspan x="348.0" textLength="4.12" lengthAdjust="spacingAndGlyphs">W</tspan><tspan x="352.5" textLength="4.12" lengthAdjust="spacingAndGlyphs">O</tspan><tspan x="357.0" textLength="4.12" lengthAdjust="spacingAndGlyphs">R</tspan><tspan x="361.5" textLength="4.12" lengthAdjust="spacingAndGlyphs">D</tspan><tspan x="366.0"> </tspan><tspan x="370.5" textLength="4.12" lengthAdjust="spacingAndGlyphs">P</tspan><tspan x="375.0" textLength="4.12" lengthAdjust="spacingAndGlyphs">T</tspan><tspan x="379.5" textLength="4.12" lengthAdjust="spacingAndGlyphs">R</tspan><tspan x="384.0"> </tspan><tspan x="388.5" textLength="4.12" lengthAdjust="spacingAndGlyphs">S</tspan><tspan x="393.0" textLength="4.12" lengthAdjust="spacingAndGlyphs">S</tspan><tspan x="397.5 402.0">:[</tspan><tspan x="406.5" textLength="4.12" lengthAdjust="spacingAndGlyphs">E</tspan><tspan x="411.0" textLength="4.12" lengthAdjust="spacingAndGlyphs">B</tspan><tspan x="415.6" textLength="4.12" lengthAdjust="spacingAndGlyphs">P</tspan><tspan x="420.1 424.6 429.1">-4]</tspan></text>
<text y="88.44" font-size="8.9" fill="#000" class="t" text-anchor="middle" stroke="#000" stroke-width="0.28"><tspan x="433.6">,</tspan><tspan x="438.1" textLength="4.12" lengthAdjust="spacingAndGlyphs">E</tspan><tspan x="442.6" textLength="4.12" lengthAdjust="spacingAndGlyphs">A</tspan><tspan x="447.1" textLength="4.12" lengthAdjust="spacingAndGlyphs">X</tspan></text>
<text y="97.41" font-size="8.9" fill="#808080" class="t" text-anchor="middle" stroke="#808080" stroke-width="0.28"><tspan x="208.0 212.5">77</tspan><tspan x="217.0" textLength="4.12" lengthAdjust="spacingAndGlyphs">F</tspan><tspan x="221.5">8</tspan><tspan x="226.0" textLength="4.12" lengthAdjust="spacingAndGlyphs">C</tspan><tspan x="230.5">3</tspan><tspan x="235.0" textLength="4.12" lengthAdjust="spacingAndGlyphs">D</tspan><tspan x="239.5">0</tspan></text>
<g clip-path="url(#hx)">
<text y="97.41" font-size="8.9" fill="#000" class="t" text-anchor="middle" stroke="#000" stroke-width="0.28"><tspan x="258.1 262.6 267.1 271.6 276.1">8945 </tspan><tspan x="280.6" textLength="4.12" lengthAdjust="spacingAndGlyphs">C</tspan><tspan x="285.1">8</tspan></text>
</g>
<text y="97.41" font-size="8.9" fill="#000" class="t" text-anchor="middle" stroke="#000" stroke-width="0.28"><tspan x="325.5" textLength="4.12" lengthAdjust="spacingAndGlyphs">M</tspan><tspan x="330.0" textLength="4.12" lengthAdjust="spacingAndGlyphs">O</tspan><tspan x="334.5" textLength="4.12" lengthAdjust="spacingAndGlyphs">V</tspan><tspan x="339.0"> </tspan></text>
<rect x="340.92" y="90.71" width="95.205" height="8.2" fill="#00ffff"/>
<text y="97.41" font-size="8.9" fill="#0010a8" class="t" text-anchor="middle" stroke="#0010a8" stroke-width="0.28"><tspan x="343.5" textLength="4.12" lengthAdjust="spacingAndGlyphs">D</tspan><tspan x="348.0" textLength="4.12" lengthAdjust="spacingAndGlyphs">W</tspan><tspan x="352.5" textLength="4.12" lengthAdjust="spacingAndGlyphs">O</tspan><tspan x="357.0" textLength="4.12" lengthAdjust="spacingAndGlyphs">R</tspan><tspan x="361.5" textLength="4.12" lengthAdjust="spacingAndGlyphs">D</tspan><tspan x="366.0"> </tspan><tspan x="370.5" textLength="4.12" lengthAdjust="spacingAndGlyphs">P</tspan><tspan x="375.0" textLength="4.12" lengthAdjust="spacingAndGlyphs">T</tspan><tspan x="379.5" textLength="4.12" lengthAdjust="spacingAndGlyphs">R</tspan><tspan x="384.0"> </tspan><tspan x="388.5" textLength="4.12" lengthAdjust="spacingAndGlyphs">S</tspan><tspan x="393.0" textLength="4.12" lengthAdjust="spacingAndGlyphs">S</tspan><tspan x="397.5 402.0">:[</tspan><tspan x="406.5" textLength="4.12" lengthAdjust="spacingAndGlyphs">E</tspan><tspan x="411.0" textLength="4.12" lengthAdjust="spacingAndGlyphs">B</tspan><tspan x="415.6" textLength="4.12" lengthAdjust="spacingAndGlyphs">P</tspan><tspan x="420.1 424.6 429.1 433.6">-38]</tspan></text>
<text y="97.41" font-size="8.9" fill="#000" class="t" text-anchor="middle" stroke="#000" stroke-width="0.28"><tspan x="438.1">,</tspan><tspan x="442.6" textLength="4.12" lengthAdjust="spacingAndGlyphs">E</tspan><tspan x="447.1" textLength="4.12" lengthAdjust="spacingAndGlyphs">A</tspan><tspan x="451.6" textLength="4.12" lengthAdjust="spacingAndGlyphs">X</tspan></text>
<text y="106.38" font-size="8.9" fill="#808080" class="t" text-anchor="middle" stroke="#808080" stroke-width="0.28"><tspan x="208.0 212.5">77</tspan><tspan x="217.0" textLength="4.12" lengthAdjust="spacingAndGlyphs">F</tspan><tspan x="221.5">8</tspan><tspan x="226.0" textLength="4.12" lengthAdjust="spacingAndGlyphs">C</tspan><tspan x="230.5">3</tspan><tspan x="235.0" textLength="4.12" lengthAdjust="spacingAndGlyphs">D</tspan><tspan x="239.5">3</tspan></text>
<path d="M247 102.08 L249.2 105.28 L251.4 102.08" stroke="#000" stroke-width="0.8" fill="none"/>
<g clip-path="url(#hx)">
<text y="106.38" font-size="8.9" fill="#000" class="t" text-anchor="middle" stroke="#000" stroke-width="0.28"><tspan x="258.1" textLength="4.12" lengthAdjust="spacingAndGlyphs">E</tspan><tspan x="262.6 267.1">9 </tspan><tspan x="271.6" textLength="4.12" lengthAdjust="spacingAndGlyphs">C</tspan><tspan x="276.1 280.6 285.1 289.6 294.1 298.6 303.1">8220000</tspan></text>
</g>
<rect x="322.9" y="99.68" width="14.115" height="8.2" fill="#ffff00"/>
<text y="106.38" font-size="8.9" fill="#000" class="t" text-anchor="middle" stroke="#000" stroke-width="0.28"><tspan x="325.5">J</tspan><tspan x="330.0" textLength="4.12" lengthAdjust="spacingAndGlyphs">M</tspan><tspan x="334.5" textLength="4.12" lengthAdjust="spacingAndGlyphs">P</tspan></text>
<rect x="340.92" y="99.68" width="63.67" height="8.2" fill="#ffff00"/>
<text y="106.38" font-size="8.9" fill="#000" class="t" text-anchor="middle" stroke="#000" stroke-width="0.28"><tspan x="343.5 348.0 352.5 357.0 361.5 366.0 370.5 375.0">ntdll.77</tspan><tspan x="379.5" textLength="4.12" lengthAdjust="spacingAndGlyphs">F</tspan><tspan x="384.0">8</tspan><tspan x="388.5" textLength="4.12" lengthAdjust="spacingAndGlyphs">E</tspan><tspan x="393.0">6</tspan><tspan x="397.5" textLength="4.12" lengthAdjust="spacingAndGlyphs">A</tspan><tspan x="402.0">0</tspan></text>
<text y="115.35" font-size="8.9" fill="#808080" class="t" text-anchor="middle" stroke="#808080" stroke-width="0.28"><tspan x="208.0 212.5">77</tspan><tspan x="217.0" textLength="4.12" lengthAdjust="spacingAndGlyphs">F</tspan><tspan x="221.5">8</tspan><tspan x="226.0" textLength="4.12" lengthAdjust="spacingAndGlyphs">C</tspan><tspan x="230.5">3</tspan><tspan x="235.0" textLength="4.12" lengthAdjust="spacingAndGlyphs">D</tspan><tspan x="239.5">8</tspan></text>
<g clip-path="url(#hx)">
<text y="115.35" font-size="8.9" fill="#000" class="t" text-anchor="middle" stroke="#000" stroke-width="0.28"><tspan x="258.1" textLength="4.12" lengthAdjust="spacingAndGlyphs">B</tspan><tspan x="262.6 267.1">8 </tspan><tspan x="271.6" textLength="4.12" lengthAdjust="spacingAndGlyphs">E</tspan><tspan x="276.1 280.6 285.1 289.6 294.1 298.6 303.1">0000000</tspan></text>
</g>
<text y="115.35" font-size="8.9" fill="#000" class="t" text-anchor="middle" stroke="#000" stroke-width="0.28"><tspan x="325.5" textLength="4.12" lengthAdjust="spacingAndGlyphs">M</tspan><tspan x="330.0" textLength="4.12" lengthAdjust="spacingAndGlyphs">O</tspan><tspan x="334.5" textLength="4.12" lengthAdjust="spacingAndGlyphs">V</tspan><tspan x="339.0"> </tspan><tspan x="343.5" textLength="4.12" lengthAdjust="spacingAndGlyphs">E</tspan><tspan x="348.0" textLength="4.12" lengthAdjust="spacingAndGlyphs">A</tspan><tspan x="352.5" textLength="4.12" lengthAdjust="spacingAndGlyphs">X</tspan><tspan x="357.0">,</tspan></text>
<text y="115.35" font-size="8.9" fill="#808000" class="t" text-anchor="middle" stroke="#808000" stroke-width="0.28"><tspan x="361.5">0</tspan><tspan x="366.0" textLength="4.12" lengthAdjust="spacingAndGlyphs">E</tspan><tspan x="370.5">0</tspan></text>
<text y="124.32" font-size="8.9" fill="#808080" class="t" text-anchor="middle" stroke="#808080" stroke-width="0.28"><tspan x="208.0 212.5">77</tspan><tspan x="217.0" textLength="4.12" lengthAdjust="spacingAndGlyphs">F</tspan><tspan x="221.5">8</tspan><tspan x="226.0" textLength="4.12" lengthAdjust="spacingAndGlyphs">C</tspan><tspan x="230.5">3</tspan><tspan x="235.0" textLength="4.12" lengthAdjust="spacingAndGlyphs">D</tspan><tspan x="239.5" textLength="4.12" lengthAdjust="spacingAndGlyphs">D</tspan></text>
<g clip-path="url(#hx)">
<text y="124.32" font-size="8.9" fill="#000" class="t" text-anchor="middle" stroke="#000" stroke-width="0.28"><tspan x="258.1">8</tspan><tspan x="262.6" textLength="4.12" lengthAdjust="spacingAndGlyphs">D</tspan><tspan x="267.1 271.6 276.1 280.6 285.1 289.6 294.1">5424 04</tspan></text>
</g>
<text y="124.32" font-size="8.9" fill="#000" class="t" text-anchor="middle" stroke="#000" stroke-width="0.28"><tspan x="325.5" textLength="4.12" lengthAdjust="spacingAndGlyphs">L</tspan><tspan x="330.0" textLength="4.12" lengthAdjust="spacingAndGlyphs">E</tspan><tspan x="334.5" textLength="4.12" lengthAdjust="spacingAndGlyphs">A</tspan><tspan x="339.0"> </tspan><tspan x="343.5" textLength="4.12" lengthAdjust="spacingAndGlyphs">E</tspan><tspan x="348.0" textLength="4.12" lengthAdjust="spacingAndGlyphs">D</tspan><tspan x="352.5" textLength="4.12" lengthAdjust="spacingAndGlyphs">X</tspan><tspan x="357.0">,</tspan></text>
<rect x="358.94" y="117.62" width="90.7" height="8.2" fill="#00ffff"/>
<text y="124.32" font-size="8.9" fill="#0010a8" class="t" text-anchor="middle" stroke="#0010a8" stroke-width="0.28"><tspan x="361.5" textLength="4.12" lengthAdjust="spacingAndGlyphs">D</tspan><tspan x="366.0" textLength="4.12" lengthAdjust="spacingAndGlyphs">W</tspan><tspan x="370.5" textLength="4.12" lengthAdjust="spacingAndGlyphs">O</tspan><tspan x="375.0" textLength="4.12" lengthAdjust="spacingAndGlyphs">R</tspan><tspan x="379.5" textLength="4.12" lengthAdjust="spacingAndGlyphs">D</tspan><tspan x="384.0"> </tspan><tspan x="388.5" textLength="4.12" lengthAdjust="spacingAndGlyphs">P</tspan><tspan x="393.0" textLength="4.12" lengthAdjust="spacingAndGlyphs">T</tspan><tspan x="397.5" textLength="4.12" lengthAdjust="spacingAndGlyphs">R</tspan><tspan x="402.0"> </tspan><tspan x="406.5" textLength="4.12" lengthAdjust="spacingAndGlyphs">S</tspan><tspan x="411.0" textLength="4.12" lengthAdjust="spacingAndGlyphs">S</tspan><tspan x="415.6 420.1">:[</tspan><tspan x="424.6" textLength="4.12" lengthAdjust="spacingAndGlyphs">E</tspan><tspan x="429.1" textLength="4.12" lengthAdjust="spacingAndGlyphs">S</tspan><tspan x="433.6" textLength="4.12" lengthAdjust="spacingAndGlyphs">P</tspan><tspan x="438.1 442.6 447.1">+4]</tspan></text>
<text y="133.29" font-size="8.9" fill="#808080" class="t" text-anchor="middle" stroke="#808080" stroke-width="0.28"><tspan x="208.0 212.5">77</tspan><tspan x="217.0" textLength="4.12" lengthAdjust="spacingAndGlyphs">F</tspan><tspan x="221.5">8</tspan><tspan x="226.0" textLength="4.12" lengthAdjust="spacingAndGlyphs">C</tspan><tspan x="230.5">3</tspan><tspan x="235.0" textLength="4.12" lengthAdjust="spacingAndGlyphs">E</tspan><tspan x="239.5">1</tspan></text>
<g clip-path="url(#hx)">
<text y="133.29" font-size="8.9" fill="#000" class="t" text-anchor="middle" stroke="#000" stroke-width="0.28"><tspan x="258.1" textLength="4.12" lengthAdjust="spacingAndGlyphs">C</tspan><tspan x="262.6" textLength="4.12" lengthAdjust="spacingAndGlyphs">D</tspan><tspan x="267.1 271.6"> 2</tspan><tspan x="276.1" textLength="4.12" lengthAdjust="spacingAndGlyphs">E</tspan></text>
</g>
<text y="133.29" font-size="8.9" fill="#000" class="t" text-anchor="middle" stroke="#000" stroke-width="0.28"><tspan x="325.5">I</tspan><tspan x="330.0" textLength="4.12" lengthAdjust="spacingAndGlyphs">N</tspan><tspan x="334.5" textLength="4.12" lengthAdjust="spacingAndGlyphs">T</tspan><tspan x="339.0"> </tspan></text>
<text y="133.29" font-size="8.9" fill="#808000" class="t" text-anchor="middle" stroke="#808000" stroke-width="0.28"><tspan x="343.5">2</tspan><tspan x="348.0" textLength="4.12" lengthAdjust="spacingAndGlyphs">E</tspan></text>
<rect x="204.3" y="135.56" width="39.6" height="8.4" fill="#000"/>
<text y="142.26" font-size="8.9" fill="#fff" class="t" text-anchor="middle" stroke="#fff" stroke-width="0.28"><tspan x="208.0 212.5">77</tspan><tspan x="217.0" textLength="4.12" lengthAdjust="spacingAndGlyphs">F</tspan><tspan x="221.5">8</tspan><tspan x="226.0" textLength="4.12" lengthAdjust="spacingAndGlyphs">C</tspan><tspan x="230.5">3</tspan><tspan x="235.0" textLength="4.12" lengthAdjust="spacingAndGlyphs">E</tspan><tspan x="239.5">3</tspan></text>
<g clip-path="url(#hx)">
<text y="142.26" font-size="8.9" fill="#000" class="t" text-anchor="middle" stroke="#000" stroke-width="0.28"><tspan x="258.1" textLength="4.12" lengthAdjust="spacingAndGlyphs">C</tspan><tspan x="262.6 267.1 271.6 276.1 280.6 285.1">2 0800</tspan></text>
</g>
<rect x="322.9" y="135.56" width="18.62" height="8.2" fill="#00ffff"/>
<text y="142.26" font-size="8.9" fill="#000" class="t" text-anchor="middle" stroke="#000" stroke-width="0.28"><tspan x="325.5" textLength="4.12" lengthAdjust="spacingAndGlyphs">R</tspan><tspan x="330.0" textLength="4.12" lengthAdjust="spacingAndGlyphs">E</tspan><tspan x="334.5" textLength="4.12" lengthAdjust="spacingAndGlyphs">T</tspan><tspan x="339.0" textLength="4.12" lengthAdjust="spacingAndGlyphs">N</tspan></text>
<text y="142.26" font-size="8.9" fill="#808000" class="t" text-anchor="middle" stroke="#808000" stroke-width="0.28"><tspan x="348.0">8</tspan></text>
<text y="151.23" font-size="8.9" fill="#808080" class="t" text-anchor="middle" stroke="#808080" stroke-width="0.28"><tspan x="208.0 212.5">77</tspan><tspan x="217.0" textLength="4.12" lengthAdjust="spacingAndGlyphs">F</tspan><tspan x="221.5">8</tspan><tspan x="226.0" textLength="4.12" lengthAdjust="spacingAndGlyphs">C</tspan><tspan x="230.5">3</tspan><tspan x="235.0" textLength="4.12" lengthAdjust="spacingAndGlyphs">E</tspan><tspan x="239.5">6</tspan></text>
<g clip-path="url(#hx)">
<text y="151.23" font-size="8.9" fill="#000" class="t" text-anchor="middle" stroke="#000" stroke-width="0.28"><tspan x="258.1 262.6">55</tspan></text>
</g>
<text y="151.23" font-size="8.9" fill="#2020e0" class="t" text-anchor="middle" stroke="#2020e0" stroke-width="0.28"><tspan x="325.5" textLength="4.12" lengthAdjust="spacingAndGlyphs">P</tspan><tspan x="330.0" textLength="4.12" lengthAdjust="spacingAndGlyphs">U</tspan><tspan x="334.5" textLength="4.12" lengthAdjust="spacingAndGlyphs">S</tspan><tspan x="339.0" textLength="4.12" lengthAdjust="spacingAndGlyphs">H</tspan></text>
<text y="151.23" font-size="8.9" fill="#000" class="t" text-anchor="middle" stroke="#000" stroke-width="0.28"><tspan x="343.5"> </tspan><tspan x="348.0" textLength="4.12" lengthAdjust="spacingAndGlyphs">E</tspan><tspan x="352.5" textLength="4.12" lengthAdjust="spacingAndGlyphs">B</tspan><tspan x="357.0" textLength="4.12" lengthAdjust="spacingAndGlyphs">P</tspan></text>
<text y="160.2" font-size="8.9" fill="#808080" class="t" text-anchor="middle" stroke="#808080" stroke-width="0.28"><tspan x="208.0 212.5">77</tspan><tspan x="217.0" textLength="4.12" lengthAdjust="spacingAndGlyphs">F</tspan><tspan x="221.5">8</tspan><tspan x="226.0" textLength="4.12" lengthAdjust="spacingAndGlyphs">C</tspan><tspan x="230.5">3</tspan><tspan x="235.0" textLength="4.12" lengthAdjust="spacingAndGlyphs">E</tspan><tspan x="239.5">7</tspan></text>
<g clip-path="url(#hx)">
<text y="160.2" font-size="8.9" fill="#000" class="t" text-anchor="middle" stroke="#000" stroke-width="0.28"><tspan x="258.1">8</tspan><tspan x="262.6" textLength="4.12" lengthAdjust="spacingAndGlyphs">B</tspan><tspan x="267.1" textLength="4.12" lengthAdjust="spacingAndGlyphs">E</tspan><tspan x="271.6" textLength="4.12" lengthAdjust="spacingAndGlyphs">C</tspan></text>
</g>
<text y="160.2" font-size="8.9" fill="#000" class="t" text-anchor="middle" stroke="#000" stroke-width="0.28"><tspan x="325.5" textLength="4.12" lengthAdjust="spacingAndGlyphs">M</tspan><tspan x="330.0" textLength="4.12" lengthAdjust="spacingAndGlyphs">O</tspan><tspan x="334.5" textLength="4.12" lengthAdjust="spacingAndGlyphs">V</tspan><tspan x="339.0"> </tspan><tspan x="343.5" textLength="4.12" lengthAdjust="spacingAndGlyphs">E</tspan><tspan x="348.0" textLength="4.12" lengthAdjust="spacingAndGlyphs">B</tspan><tspan x="352.5" textLength="4.12" lengthAdjust="spacingAndGlyphs">P</tspan><tspan x="357.0">,</tspan><tspan x="361.5" textLength="4.12" lengthAdjust="spacingAndGlyphs">E</tspan><tspan x="366.0" textLength="4.12" lengthAdjust="spacingAndGlyphs">S</tspan><tspan x="370.5" textLength="4.12" lengthAdjust="spacingAndGlyphs">P</tspan></text>
<text y="169.17" font-size="8.9" fill="#808080" class="t" text-anchor="middle" stroke="#808080" stroke-width="0.28"><tspan x="208.0 212.5">77</tspan><tspan x="217.0" textLength="4.12" lengthAdjust="spacingAndGlyphs">F</tspan><tspan x="221.5">8</tspan><tspan x="226.0" textLength="4.12" lengthAdjust="spacingAndGlyphs">C</tspan><tspan x="230.5">3</tspan><tspan x="235.0" textLength="4.12" lengthAdjust="spacingAndGlyphs">E</tspan><tspan x="239.5">9</tspan></text>
<g clip-path="url(#hx)">
<text y="169.17" font-size="8.9" fill="#000" class="t" text-anchor="middle" stroke="#000" stroke-width="0.28"><tspan x="258.1">6</tspan><tspan x="262.6" textLength="4.12" lengthAdjust="spacingAndGlyphs">A</tspan><tspan x="267.1"> </tspan><tspan x="271.6" textLength="4.12" lengthAdjust="spacingAndGlyphs">F</tspan><tspan x="276.1" textLength="4.12" lengthAdjust="spacingAndGlyphs">F</tspan></text>
</g>
<text y="169.17" font-size="8.9" fill="#2020e0" class="t" text-anchor="middle" stroke="#2020e0" stroke-width="0.28"><tspan x="325.5" textLength="4.12" lengthAdjust="spacingAndGlyphs">P</tspan><tspan x="330.0" textLength="4.12" lengthAdjust="spacingAndGlyphs">U</tspan><tspan x="334.5" textLength="4.12" lengthAdjust="spacingAndGlyphs">S</tspan><tspan x="339.0" textLength="4.12" lengthAdjust="spacingAndGlyphs">H</tspan></text>
<text y="169.17" font-size="8.9" fill="#808000" class="t" text-anchor="middle" stroke="#808000" stroke-width="0.28"><tspan x="348.0 352.5">-1</tspan></text>
<text y="178.14" font-size="8.9" fill="#808080" class="t" text-anchor="middle" stroke="#808080" stroke-width="0.28"><tspan x="208.0 212.5">77</tspan><tspan x="217.0" textLength="4.12" lengthAdjust="spacingAndGlyphs">F</tspan><tspan x="221.5">8</tspan><tspan x="226.0" textLength="4.12" lengthAdjust="spacingAndGlyphs">C</tspan><tspan x="230.5">3</tspan><tspan x="235.0" textLength="4.12" lengthAdjust="spacingAndGlyphs">E</tspan><tspan x="239.5" textLength="4.12" lengthAdjust="spacingAndGlyphs">B</tspan></text>
<g clip-path="url(#hx)">
<text y="178.14" font-size="8.9" fill="#000" class="t" text-anchor="middle" stroke="#000" stroke-width="0.28"><tspan x="258.1 262.6 267.1">68 </tspan><tspan x="271.6" textLength="4.12" lengthAdjust="spacingAndGlyphs">A</tspan><tspan x="276.1 280.6 285.1">841</tspan><tspan x="289.6" textLength="4.12" lengthAdjust="spacingAndGlyphs">F</tspan><tspan x="294.1 298.6 303.1">977</tspan></text>
<rect x="269.325" y="178.04" width="36.04" height="0.8" fill="#000"/>
</g>
<text y="178.14" font-size="8.9" fill="#2020e0" class="t" text-anchor="middle" stroke="#2020e0" stroke-width="0.28"><tspan x="325.5" textLength="4.12" lengthAdjust="spacingAndGlyphs">P</tspan><tspan x="330.0" textLength="4.12" lengthAdjust="spacingAndGlyphs">U</tspan><tspan x="334.5" textLength="4.12" lengthAdjust="spacingAndGlyphs">S</tspan><tspan x="339.0" textLength="4.12" lengthAdjust="spacingAndGlyphs">H</tspan></text>
<rect x="345.425" y="171.44" width="63.67" height="8.2" fill="#ffff00"/>
<text y="178.14" font-size="8.9" fill="#000" class="t" text-anchor="middle" stroke="#000" stroke-width="0.28"><tspan x="348.0 352.5 357.0 361.5 366.0 370.5 375.0 379.5">ntdll.77</tspan><tspan x="384.0" textLength="4.12" lengthAdjust="spacingAndGlyphs">F</tspan><tspan x="388.5 393.0 397.5">941</tspan><tspan x="402.0" textLength="4.12" lengthAdjust="spacingAndGlyphs">A</tspan><tspan x="406.5">8</tspan></text>
<text y="187.11" font-size="8.9" fill="#808080" class="t" text-anchor="middle" stroke="#808080" stroke-width="0.28"><tspan x="208.0 212.5">77</tspan><tspan x="217.0" textLength="4.12" lengthAdjust="spacingAndGlyphs">F</tspan><tspan x="221.5">8</tspan><tspan x="226.0" textLength="4.12" lengthAdjust="spacingAndGlyphs">C</tspan><tspan x="230.5">3</tspan><tspan x="235.0" textLength="4.12" lengthAdjust="spacingAndGlyphs">F</tspan><tspan x="239.5">0</tspan></text>
<g clip-path="url(#hx)">
<text y="187.11" font-size="8.9" fill="#000" class="t" text-anchor="middle" stroke="#000" stroke-width="0.28"><tspan x="258.1 262.6 267.1">68 </tspan><tspan x="271.6" textLength="4.12" lengthAdjust="spacingAndGlyphs">D</tspan><tspan x="276.1" textLength="4.12" lengthAdjust="spacingAndGlyphs">B</tspan><tspan x="280.6 285.1">80</tspan><tspan x="289.6" textLength="4.12" lengthAdjust="spacingAndGlyphs">F</tspan><tspan x="294.1" textLength="4.12" lengthAdjust="spacingAndGlyphs">B</tspan><tspan x="298.6 303.1">77</tspan></text>
<rect x="269.325" y="187.01" width="36.04" height="0.8" fill="#000"/>
</g>
<text y="187.11" font-size="8.9" fill="#2020e0" class="t" text-anchor="middle" stroke="#2020e0" stroke-width="0.28"><tspan x="325.5" textLength="4.12" lengthAdjust="spacingAndGlyphs">P</tspan><tspan x="330.0" textLength="4.12" lengthAdjust="spacingAndGlyphs">U</tspan><tspan x="334.5" textLength="4.12" lengthAdjust="spacingAndGlyphs">S</tspan><tspan x="339.0" textLength="4.12" lengthAdjust="spacingAndGlyphs">H</tspan></text>
<rect x="345.425" y="180.41" width="63.67" height="8.2" fill="#ffff00"/>
<text y="187.11" font-size="8.9" fill="#000" class="t" text-anchor="middle" stroke="#000" stroke-width="0.28"><tspan x="348.0 352.5 357.0 361.5 366.0 370.5 375.0 379.5">ntdll.77</tspan><tspan x="384.0" textLength="4.12" lengthAdjust="spacingAndGlyphs">F</tspan><tspan x="388.5" textLength="4.12" lengthAdjust="spacingAndGlyphs">B</tspan><tspan x="393.0 397.5">80</tspan><tspan x="402.0" textLength="4.12" lengthAdjust="spacingAndGlyphs">D</tspan><tspan x="406.5" textLength="4.12" lengthAdjust="spacingAndGlyphs">B</tspan></text>
<text y="196.08" font-size="8.9" fill="#808080" class="t" text-anchor="middle" stroke="#808080" stroke-width="0.28"><tspan x="208.0 212.5">77</tspan><tspan x="217.0" textLength="4.12" lengthAdjust="spacingAndGlyphs">F</tspan><tspan x="221.5">8</tspan><tspan x="226.0" textLength="4.12" lengthAdjust="spacingAndGlyphs">C</tspan><tspan x="230.5">3</tspan><tspan x="235.0" textLength="4.12" lengthAdjust="spacingAndGlyphs">F</tspan><tspan x="239.5">5</tspan></text>
<g clip-path="url(#hx)">
<text y="196.08" font-size="8.9" fill="#000" class="t" text-anchor="middle" stroke="#000" stroke-width="0.28"><tspan x="258.1 262.6 267.1">64:</tspan><tspan x="271.6" textLength="4.12" lengthAdjust="spacingAndGlyphs">A</tspan><tspan x="276.1 280.6 285.1 289.6 294.1 298.6 303.1 307.6 312.1 316.6">1 00000000</tspan></text>
</g>
<text y="196.08" font-size="8.9" fill="#000" class="t" text-anchor="middle" stroke="#000" stroke-width="0.28"><tspan x="325.5" textLength="4.12" lengthAdjust="spacingAndGlyphs">M</tspan><tspan x="330.0" textLength="4.12" lengthAdjust="spacingAndGlyphs">O</tspan><tspan x="334.5" textLength="4.12" lengthAdjust="spacingAndGlyphs">V</tspan><tspan x="339.0"> </tspan><tspan x="343.5" textLength="4.12" lengthAdjust="spacingAndGlyphs">E</tspan><tspan x="348.0" textLength="4.12" lengthAdjust="spacingAndGlyphs">A</tspan><tspan x="352.5" textLength="4.12" lengthAdjust="spacingAndGlyphs">X</tspan><tspan x="357.0">,</tspan></text>
<text y="196.08" font-size="8.9" fill="#0010a8" class="t" text-anchor="middle" stroke="#0010a8" stroke-width="0.28"><tspan x="361.5" textLength="4.12" lengthAdjust="spacingAndGlyphs">D</tspan><tspan x="366.0" textLength="4.12" lengthAdjust="spacingAndGlyphs">W</tspan><tspan x="370.5" textLength="4.12" lengthAdjust="spacingAndGlyphs">O</tspan><tspan x="375.0" textLength="4.12" lengthAdjust="spacingAndGlyphs">R</tspan><tspan x="379.5" textLength="4.12" lengthAdjust="spacingAndGlyphs">D</tspan><tspan x="384.0"> </tspan><tspan x="388.5" textLength="4.12" lengthAdjust="spacingAndGlyphs">P</tspan><tspan x="393.0" textLength="4.12" lengthAdjust="spacingAndGlyphs">T</tspan><tspan x="397.5" textLength="4.12" lengthAdjust="spacingAndGlyphs">R</tspan><tspan x="402.0"> </tspan><tspan x="406.5" textLength="4.12" lengthAdjust="spacingAndGlyphs">F</tspan><tspan x="411.0" textLength="4.12" lengthAdjust="spacingAndGlyphs">S</tspan><tspan x="415.6 420.1 424.6 429.1">:[0]</tspan></text>
<text y="205.05" font-size="8.9" fill="#808080" class="t" text-anchor="middle" stroke="#808080" stroke-width="0.28"><tspan x="208.0 212.5">77</tspan><tspan x="217.0" textLength="4.12" lengthAdjust="spacingAndGlyphs">F</tspan><tspan x="221.5">8</tspan><tspan x="226.0" textLength="4.12" lengthAdjust="spacingAndGlyphs">C</tspan><tspan x="230.5">3</tspan><tspan x="235.0" textLength="4.12" lengthAdjust="spacingAndGlyphs">F</tspan><tspan x="239.5" textLength="4.12" lengthAdjust="spacingAndGlyphs">B</tspan></text>
<g clip-path="url(#hx)">
<text y="205.05" font-size="8.9" fill="#000" class="t" text-anchor="middle" stroke="#000" stroke-width="0.28"><tspan x="258.1 262.6">50</tspan></text>
</g>
<text y="205.05" font-size="8.9" fill="#2020e0" class="t" text-anchor="middle" stroke="#2020e0" stroke-width="0.28"><tspan x="325.5" textLength="4.12" lengthAdjust="spacingAndGlyphs">P</tspan><tspan x="330.0" textLength="4.12" lengthAdjust="spacingAndGlyphs">U</tspan><tspan x="334.5" textLength="4.12" lengthAdjust="spacingAndGlyphs">S</tspan><tspan x="339.0" textLength="4.12" lengthAdjust="spacingAndGlyphs">H</tspan></text>
<text y="205.05" font-size="8.9" fill="#000" class="t" text-anchor="middle" stroke="#000" stroke-width="0.28"><tspan x="343.5"> </tspan><tspan x="348.0" textLength="4.12" lengthAdjust="spacingAndGlyphs">E</tspan><tspan x="352.5" textLength="4.12" lengthAdjust="spacingAndGlyphs">A</tspan><tspan x="357.0" textLength="4.12" lengthAdjust="spacingAndGlyphs">X</tspan></text>
<text y="214.02" font-size="8.9" fill="#808080" class="t" text-anchor="middle" stroke="#808080" stroke-width="0.28"><tspan x="208.0 212.5">77</tspan><tspan x="217.0" textLength="4.12" lengthAdjust="spacingAndGlyphs">F</tspan><tspan x="221.5">8</tspan><tspan x="226.0" textLength="4.12" lengthAdjust="spacingAndGlyphs">C</tspan><tspan x="230.5">3</tspan><tspan x="235.0" textLength="4.12" lengthAdjust="spacingAndGlyphs">F</tspan><tspan x="239.5" textLength="4.12" lengthAdjust="spacingAndGlyphs">C</tspan></text>
<g clip-path="url(#hx)">
<text y="214.02" font-size="8.9" fill="#000" class="t" text-anchor="middle" stroke="#000" stroke-width="0.28"><tspan x="258.1 262.6 267.1 271.6 276.1 280.6 285.1 289.6 294.1 298.6 303.1 307.6 312.1 316.6 321.1 325.6">64:8925 00000000</tspan></text>
</g>
<text y="214.02" font-size="8.9" fill="#000" class="t" text-anchor="middle" stroke="#000" stroke-width="0.28"><tspan x="325.5" textLength="4.12" lengthAdjust="spacingAndGlyphs">M</tspan><tspan x="330.0" textLength="4.12" lengthAdjust="spacingAndGlyphs">O</tspan><tspan x="334.5" textLength="4.12" lengthAdjust="spacingAndGlyphs">V</tspan><tspan x="339.0"> </tspan></text>
<text y="214.02" font-size="8.9" fill="#0010a8" class="t" text-anchor="middle" stroke="#0010a8" stroke-width="0.28"><tspan x="343.5" textLength="4.12" lengthAdjust="spacingAndGlyphs">D</tspan><tspan x="348.0" textLength="4.12" lengthAdjust="spacingAndGlyphs">W</tspan><tspan x="352.5" textLength="4.12" lengthAdjust="spacingAndGlyphs">O</tspan><tspan x="357.0" textLength="4.12" lengthAdjust="spacingAndGlyphs">R</tspan><tspan x="361.5" textLength="4.12" lengthAdjust="spacingAndGlyphs">D</tspan><tspan x="366.0"> </tspan><tspan x="370.5" textLength="4.12" lengthAdjust="spacingAndGlyphs">P</tspan><tspan x="375.0" textLength="4.12" lengthAdjust="spacingAndGlyphs">T</tspan><tspan x="379.5" textLength="4.12" lengthAdjust="spacingAndGlyphs">R</tspan><tspan x="384.0"> </tspan><tspan x="388.5" textLength="4.12" lengthAdjust="spacingAndGlyphs">F</tspan><tspan x="393.0" textLength="4.12" lengthAdjust="spacingAndGlyphs">S</tspan><tspan x="397.5 402.0 406.5 411.0">:[0]</tspan></text>
<text y="214.02" font-size="8.9" fill="#000" class="t" text-anchor="middle" stroke="#000" stroke-width="0.28"><tspan x="415.6">,</tspan><tspan x="420.1" textLength="4.12" lengthAdjust="spacingAndGlyphs">E</tspan><tspan x="424.6" textLength="4.12" lengthAdjust="spacingAndGlyphs">S</tspan><tspan x="429.1" textLength="4.12" lengthAdjust="spacingAndGlyphs">P</tspan></text>
<text y="222.99" font-size="8.9" fill="#808080" class="t" text-anchor="middle" stroke="#808080" stroke-width="0.28"><tspan x="208.0 212.5">77</tspan><tspan x="217.0" textLength="4.12" lengthAdjust="spacingAndGlyphs">F</tspan><tspan x="221.5">8</tspan><tspan x="226.0" textLength="4.12" lengthAdjust="spacingAndGlyphs">C</tspan><tspan x="230.5 235.0 239.5">403</tspan></text>
<g clip-path="url(#hx)">
<text y="222.99" font-size="8.9" fill="#000" class="t" text-anchor="middle" stroke="#000" stroke-width="0.28"><tspan x="258.1 262.6">51</tspan></text>
</g>
<text y="222.99" font-size="8.9" fill="#2020e0" class="t" text-anchor="middle" stroke="#2020e0" stroke-width="0.28"><tspan x="325.5" textLength="4.12" lengthAdjust="spacingAndGlyphs">P</tspan><tspan x="330.0" textLength="4.12" lengthAdjust="spacingAndGlyphs">U</tspan><tspan x="334.5" textLength="4.12" lengthAdjust="spacingAndGlyphs">S</tspan><tspan x="339.0" textLength="4.12" lengthAdjust="spacingAndGlyphs">H</tspan></text>
<text y="222.99" font-size="8.9" fill="#000" class="t" text-anchor="middle" stroke="#000" stroke-width="0.28"><tspan x="343.5"> </tspan><tspan x="348.0" textLength="4.12" lengthAdjust="spacingAndGlyphs">E</tspan><tspan x="352.5" textLength="4.12" lengthAdjust="spacingAndGlyphs">C</tspan><tspan x="357.0" textLength="4.12" lengthAdjust="spacingAndGlyphs">X</tspan></text>
<rect x="204.5" y="315.2" width="598.5" height="8.3" fill="#c4c2c4"/>
<rect x="803" y="51.5" width="15.3" height="325" fill="url(#dith)"/>
<rect x="803" y="51.5" width="15.3" height="15.2" fill="#d4d0c8"/>
<rect x="803" y="51.5" width="15.3" height="0.8" fill="#f4f4f4"/>
<rect x="803" y="51.5" width="0.8" height="15.2" fill="#f4f4f4"/>
<rect x="803" y="65.8" width="15.3" height="0.9" fill="#404040"/>
<rect x="817.4" y="51.5" width="0.9" height="15.2" fill="#404040"/>
<rect x="803.9" y="65" width="13.5" height="0.8" fill="#808080"/>
<rect x="816.6" y="52.4" width="0.8" height="13.4" fill="#808080"/>
<path d="M806.85 60.1 L813.85 60.1 L810.35 56.4 Z" fill="#000"/>
<rect x="803" y="361.3" width="15.3" height="15.2" fill="#d4d0c8"/>
<rect x="803" y="361.3" width="15.3" height="0.8" fill="#f4f4f4"/>
<rect x="803" y="361.3" width="0.8" height="15.2" fill="#f4f4f4"/>
<rect x="803" y="375.6" width="15.3" height="0.9" fill="#404040"/>
<rect x="817.4" y="361.3" width="0.9" height="15.2" fill="#404040"/>
<rect x="803.9" y="374.8" width="13.5" height="0.8" fill="#808080"/>
<rect x="816.6" y="362.2" width="0.8" height="13.4" fill="#808080"/>
<path d="M807.15 367.3 L813.55 367.3 L810.35 370.7 Z" fill="#000"/>
<rect x="803" y="113.2" width="15.3" height="15.4" fill="#d4d0c8"/>
<rect x="803" y="113.2" width="15.3" height="0.8" fill="#f4f4f4"/>
<rect x="803" y="113.2" width="0.8" height="15.4" fill="#f4f4f4"/>
<rect x="803" y="127.7" width="15.3" height="0.9" fill="#404040"/>
<rect x="817.4" y="113.2" width="0.9" height="15.4" fill="#404040"/>
<rect x="803.9" y="126.9" width="13.5" height="0.8" fill="#808080"/>
<rect x="816.6" y="114.1" width="0.8" height="13.6" fill="#808080"/>
<rect x="818.2" y="50.3" width="1.7" height="328.3" fill="#101010"/>
<rect x="203" y="376.6" width="616.9" height="1.9" fill="#101010"/>
<rect x="203" y="378.5" width="640" height="2.2" fill="#c8c8c8"/>
<rect x="819.9" y="50" width="10.1" height="1.3" fill="#505050"/>
<rect x="819.9" y="51.3" width="10.1" height="10.8" fill="#c6c3c6"/>
<rect x="819.9" y="51.3" width="10.1" height="0.8" fill="#f4f4f4"/>
<rect x="819.9" y="51.3" width="0.8" height="10.7" fill="#f4f4f4"/>
<rect x="820" y="62" width="10" height="1.1" fill="#101010"/>
<text x="821.5" y="60.2" font-size="9.4" fill="#000" class="ch">寄</text>
<text y="70.9" font-size="8.9" fill="#808080" class="t" text-anchor="middle" stroke="#808080" stroke-width="0.28"><tspan x="824.3" textLength="4.12" lengthAdjust="spacingAndGlyphs">E</tspan><tspan x="828.8" textLength="4.12" lengthAdjust="spacingAndGlyphs">A</tspan></text>
<text y="79.9" font-size="8.9" fill="#808080" class="t" text-anchor="middle" stroke="#808080" stroke-width="0.28"><tspan x="824.3" textLength="4.12" lengthAdjust="spacingAndGlyphs">E</tspan><tspan x="828.8" textLength="4.12" lengthAdjust="spacingAndGlyphs">C</tspan></text>
<text y="88.9" font-size="8.9" fill="#808080" class="t" text-anchor="middle" stroke="#808080" stroke-width="0.28"><tspan x="824.3" textLength="4.12" lengthAdjust="spacingAndGlyphs">E</tspan><tspan x="828.8" textLength="4.12" lengthAdjust="spacingAndGlyphs">D</tspan></text>
<text y="97.9" font-size="8.9" fill="#808080" class="t" text-anchor="middle" stroke="#808080" stroke-width="0.28"><tspan x="824.3" textLength="4.12" lengthAdjust="spacingAndGlyphs">E</tspan><tspan x="828.8" textLength="4.12" lengthAdjust="spacingAndGlyphs">B</tspan></text>
<text y="106.9" font-size="8.9" fill="#808080" class="t" text-anchor="middle" stroke="#808080" stroke-width="0.28"><tspan x="824.3" textLength="4.12" lengthAdjust="spacingAndGlyphs">E</tspan><tspan x="828.8" textLength="4.12" lengthAdjust="spacingAndGlyphs">S</tspan></text>
<text y="115.9" font-size="8.9" fill="#808080" class="t" text-anchor="middle" stroke="#808080" stroke-width="0.28"><tspan x="824.3" textLength="4.12" lengthAdjust="spacingAndGlyphs">E</tspan><tspan x="828.8" textLength="4.12" lengthAdjust="spacingAndGlyphs">B</tspan></text>
<text y="124.9" font-size="8.9" fill="#808080" class="t" text-anchor="middle" stroke="#808080" stroke-width="0.28"><tspan x="824.3" textLength="4.12" lengthAdjust="spacingAndGlyphs">E</tspan><tspan x="828.8" textLength="4.12" lengthAdjust="spacingAndGlyphs">S</tspan></text>
<text y="133.8" font-size="8.9" fill="#808080" class="t" text-anchor="middle" stroke="#808080" stroke-width="0.28"><tspan x="824.3" textLength="4.12" lengthAdjust="spacingAndGlyphs">E</tspan><tspan x="828.8" textLength="4.12" lengthAdjust="spacingAndGlyphs">D</tspan></text>
<text y="147" font-size="8.9" fill="#808080" class="t" text-anchor="middle" stroke="#808080" stroke-width="0.28"><tspan x="824.3" textLength="4.12" lengthAdjust="spacingAndGlyphs">E</tspan><tspan x="828.8">I</tspan></text>
<text y="160.3" font-size="8.9" fill="#808080" class="t" text-anchor="middle" stroke="#808080" stroke-width="0.28"><tspan x="824.3" textLength="4.12" lengthAdjust="spacingAndGlyphs">C</tspan></text>
<text y="169.3" font-size="8.9" fill="#808080" class="t" text-anchor="middle" stroke="#808080" stroke-width="0.28"><tspan x="824.3" textLength="4.12" lengthAdjust="spacingAndGlyphs">P</tspan></text>
<text y="178.5" font-size="8.9" fill="#808080" class="t" text-anchor="middle" stroke="#808080" stroke-width="0.28"><tspan x="824.3" textLength="4.12" lengthAdjust="spacingAndGlyphs">A</tspan></text>
<text y="187.7" font-size="8.9" fill="#808080" class="t" text-anchor="middle" stroke="#808080" stroke-width="0.28"><tspan x="824.3" textLength="4.12" lengthAdjust="spacingAndGlyphs">Z</tspan></text>
<text y="196.8" font-size="8.9" fill="#808080" class="t" text-anchor="middle" stroke="#808080" stroke-width="0.28"><tspan x="824.3" textLength="4.12" lengthAdjust="spacingAndGlyphs">S</tspan></text>
<text y="205.8" font-size="8.9" fill="#808080" class="t" text-anchor="middle" stroke="#808080" stroke-width="0.28"><tspan x="824.3" textLength="4.12" lengthAdjust="spacingAndGlyphs">T</tspan></text>
<text y="214.8" font-size="8.9" fill="#808080" class="t" text-anchor="middle" stroke="#808080" stroke-width="0.28"><tspan x="824.3" textLength="4.12" lengthAdjust="spacingAndGlyphs">D</tspan></text>
<text y="223.7" font-size="8.9" fill="#808080" class="t" text-anchor="middle" stroke="#808080" stroke-width="0.28"><tspan x="824.3" textLength="4.12" lengthAdjust="spacingAndGlyphs">O</tspan></text>
<text y="237.7" font-size="8.9" fill="#808080" class="t" text-anchor="middle" stroke="#808080" stroke-width="0.28"><tspan x="824.3" textLength="4.12" lengthAdjust="spacingAndGlyphs">E</tspan><tspan x="828.8" textLength="4.12" lengthAdjust="spacingAndGlyphs">F</tspan></text>
<text y="251.3" font-size="8.9" fill="#808080" class="t" text-anchor="middle" stroke="#808080" stroke-width="0.28"><tspan x="824.3" textLength="4.12" lengthAdjust="spacingAndGlyphs">S</tspan><tspan x="828.8" textLength="4.12" lengthAdjust="spacingAndGlyphs">T</tspan></text>
<text y="260.2" font-size="8.9" fill="#808080" class="t" text-anchor="middle" stroke="#808080" stroke-width="0.28"><tspan x="824.3" textLength="4.12" lengthAdjust="spacingAndGlyphs">S</tspan><tspan x="828.8" textLength="4.12" lengthAdjust="spacingAndGlyphs">T</tspan></text>
<text y="269.1" font-size="8.9" fill="#808080" class="t" text-anchor="middle" stroke="#808080" stroke-width="0.28"><tspan x="824.3" textLength="4.12" lengthAdjust="spacingAndGlyphs">S</tspan><tspan x="828.8" textLength="4.12" lengthAdjust="spacingAndGlyphs">T</tspan></text>
<text y="278" font-size="8.9" fill="#808080" class="t" text-anchor="middle" stroke="#808080" stroke-width="0.28"><tspan x="824.3" textLength="4.12" lengthAdjust="spacingAndGlyphs">S</tspan><tspan x="828.8" textLength="4.12" lengthAdjust="spacingAndGlyphs">T</tspan></text>
<text y="286.9" font-size="8.9" fill="#808080" class="t" text-anchor="middle" stroke="#808080" stroke-width="0.28"><tspan x="824.3" textLength="4.12" lengthAdjust="spacingAndGlyphs">S</tspan><tspan x="828.8" textLength="4.12" lengthAdjust="spacingAndGlyphs">T</tspan></text>
<text y="295.8" font-size="8.9" fill="#808080" class="t" text-anchor="middle" stroke="#808080" stroke-width="0.28"><tspan x="824.3" textLength="4.12" lengthAdjust="spacingAndGlyphs">S</tspan><tspan x="828.8" textLength="4.12" lengthAdjust="spacingAndGlyphs">T</tspan></text>
<text y="304.7" font-size="8.9" fill="#808080" class="t" text-anchor="middle" stroke="#808080" stroke-width="0.28"><tspan x="824.3" textLength="4.12" lengthAdjust="spacingAndGlyphs">S</tspan><tspan x="828.8" textLength="4.12" lengthAdjust="spacingAndGlyphs">T</tspan></text>
<text y="313.6" font-size="8.9" fill="#808080" class="t" text-anchor="middle" stroke="#808080" stroke-width="0.28"><tspan x="824.3" textLength="4.12" lengthAdjust="spacingAndGlyphs">S</tspan><tspan x="828.8" textLength="4.12" lengthAdjust="spacingAndGlyphs">T</tspan></text>
<text y="331.5" font-size="8.9" fill="#808080" class="t" text-anchor="middle" stroke="#808080" stroke-width="0.28"><tspan x="824.3" textLength="4.12" lengthAdjust="spacingAndGlyphs">F</tspan><tspan x="828.8" textLength="4.12" lengthAdjust="spacingAndGlyphs">S</tspan></text>
<text y="341.1" font-size="8.9" fill="#808080" class="t" text-anchor="middle" stroke="#808080" stroke-width="0.28"><tspan x="824.3" textLength="4.12" lengthAdjust="spacingAndGlyphs">F</tspan><tspan x="828.8" textLength="4.12" lengthAdjust="spacingAndGlyphs">C</tspan></text>
<rect x="203" y="380.4" width="567.3" height="1" fill="#404040"/>
<rect x="203" y="380.5" width="0.9" height="190" fill="#707070"/>
<rect x="204.1" y="381.3" width="566.2" height="10.6" fill="#c6c3c6"/>
<rect x="204.1" y="391.9" width="566.2" height="1.1" fill="#101010"/>
<rect x="785.3" y="380.8" width="1.3" height="190" fill="#6c6c6c"/>
<rect x="770.3" y="381.2" width="14.9" height="186.4" fill="url(#dith)"/>
<rect x="770.3" y="381.2" width="14.9" height="14.5" fill="#d4d0c8"/>
<rect x="770.3" y="381.2" width="14.9" height="0.8" fill="#f4f4f4"/>
<rect x="770.3" y="381.2" width="0.8" height="14.5" fill="#f4f4f4"/>
<rect x="770.3" y="394.8" width="14.9" height="0.9" fill="#404040"/>
<rect x="784.3" y="381.2" width="0.9" height="14.5" fill="#404040"/>
<rect x="771.2" y="394" width="13.1" height="0.8" fill="#808080"/>
<rect x="783.5" y="382.1" width="0.8" height="12.7" fill="#808080"/>
<path d="M773.95 389.45 L780.95 389.45 L777.45 385.75 Z" fill="#000"/>
<rect x="770.3" y="553.1" width="14.9" height="14.5" fill="#d4d0c8"/>
<rect x="770.3" y="553.1" width="14.9" height="0.8" fill="#f4f4f4"/>
<rect x="770.3" y="553.1" width="0.8" height="14.5" fill="#f4f4f4"/>
<rect x="770.3" y="566.7" width="14.9" height="0.9" fill="#404040"/>
<rect x="784.3" y="553.1" width="0.9" height="14.5" fill="#404040"/>
<rect x="771.2" y="565.9" width="13.1" height="0.8" fill="#808080"/>
<rect x="783.5" y="554" width="0.8" height="12.7" fill="#808080"/>
<path d="M774.25 558.75 L780.65 558.75 L777.45 562.15 Z" fill="#000"/>
<rect x="770.3" y="396.2" width="14.9" height="15.6" fill="#d4d0c8"/>
<rect x="770.3" y="396.2" width="14.9" height="0.8" fill="#f4f4f4"/>
<rect x="770.3" y="396.2" width="0.8" height="15.6" fill="#f4f4f4"/>
<rect x="770.3" y="410.9" width="14.9" height="0.9" fill="#404040"/>
<rect x="784.3" y="396.2" width="0.9" height="15.6" fill="#404040"/>
<rect x="771.2" y="410.1" width="13.1" height="0.8" fill="#808080"/>
<rect x="783.5" y="397.1" width="0.8" height="13.8" fill="#808080"/>
<rect x="827.3" y="381" width="0.9" height="190" fill="#909090"/>
<rect x="827.9" y="381" width="2.2" height="13.6" fill="#bcbcc2"/>
<rect x="787" y="381" width="39.8" height="8.6" fill="#000"/>
<text y="388.7" font-size="8.9" fill="#fff" class="t" text-anchor="middle" stroke="#fff" stroke-width="0.28"><tspan x="790.9 795.4 799.9 804.4">0012</tspan><tspan x="808.9" textLength="4.12" lengthAdjust="spacingAndGlyphs">F</tspan><tspan x="813.4" textLength="4.12" lengthAdjust="spacingAndGlyphs">E</tspan><tspan x="817.9">9</tspan><tspan x="822.4" textLength="4.12" lengthAdjust="spacingAndGlyphs">C</tspan></text>
<text y="397.67" font-size="8.9" fill="#808080" class="t" text-anchor="middle" stroke="#808080" stroke-width="0.28"><tspan x="790.9 795.4 799.9 804.4">0012</tspan><tspan x="808.9" textLength="4.12" lengthAdjust="spacingAndGlyphs">F</tspan><tspan x="813.4" textLength="4.12" lengthAdjust="spacingAndGlyphs">E</tspan><tspan x="817.9" textLength="4.12" lengthAdjust="spacingAndGlyphs">A</tspan><tspan x="822.4">0</tspan></text>
<text y="406.64" font-size="8.9" fill="#808080" class="t" text-anchor="middle" stroke="#808080" stroke-width="0.28"><tspan x="790.9 795.4 799.9 804.4">0012</tspan><tspan x="808.9" textLength="4.12" lengthAdjust="spacingAndGlyphs">F</tspan><tspan x="813.4" textLength="4.12" lengthAdjust="spacingAndGlyphs">E</tspan><tspan x="817.9" textLength="4.12" lengthAdjust="spacingAndGlyphs">A</tspan><tspan x="822.4">4</tspan></text>
<text y="415.61" font-size="8.9" fill="#808080" class="t" text-anchor="middle" stroke="#808080" stroke-width="0.28"><tspan x="790.9 795.4 799.9 804.4">0012</tspan><tspan x="808.9" textLength="4.12" lengthAdjust="spacingAndGlyphs">F</tspan><tspan x="813.4" textLength="4.12" lengthAdjust="spacingAndGlyphs">E</tspan><tspan x="817.9" textLength="4.12" lengthAdjust="spacingAndGlyphs">A</tspan><tspan x="822.4">8</tspan></text>
<text y="424.58" font-size="8.9" fill="#808080" class="t" text-anchor="middle" stroke="#808080" stroke-width="0.28"><tspan x="790.9 795.4 799.9 804.4">0012</tspan><tspan x="808.9" textLength="4.12" lengthAdjust="spacingAndGlyphs">F</tspan><tspan x="813.4" textLength="4.12" lengthAdjust="spacingAndGlyphs">E</tspan><tspan x="817.9" textLength="4.12" lengthAdjust="spacingAndGlyphs">A</tspan><tspan x="822.4" textLength="4.12" lengthAdjust="spacingAndGlyphs">C</tspan></text>
<text y="433.55" font-size="8.9" fill="#808080" class="t" text-anchor="middle" stroke="#808080" stroke-width="0.28"><tspan x="790.9 795.4 799.9 804.4">0012</tspan><tspan x="808.9" textLength="4.12" lengthAdjust="spacingAndGlyphs">F</tspan><tspan x="813.4" textLength="4.12" lengthAdjust="spacingAndGlyphs">E</tspan><tspan x="817.9" textLength="4.12" lengthAdjust="spacingAndGlyphs">B</tspan><tspan x="822.4">0</tspan></text>
<text y="442.52" font-size="8.9" fill="#808080" class="t" text-anchor="middle" stroke="#808080" stroke-width="0.28"><tspan x="790.9 795.4 799.9 804.4">0012</tspan><tspan x="808.9" textLength="4.12" lengthAdjust="spacingAndGlyphs">F</tspan><tspan x="813.4" textLength="4.12" lengthAdjust="spacingAndGlyphs">E</tspan><tspan x="817.9" textLength="4.12" lengthAdjust="spacingAndGlyphs">B</tspan><tspan x="822.4">4</tspan></text>
<text y="451.49" font-size="8.9" fill="#808080" class="t" text-anchor="middle" stroke="#808080" stroke-width="0.28"><tspan x="790.9 795.4 799.9 804.4">0012</tspan><tspan x="808.9" textLength="4.12" lengthAdjust="spacingAndGlyphs">F</tspan><tspan x="813.4" textLength="4.12" lengthAdjust="spacingAndGlyphs">E</tspan><tspan x="817.9" textLength="4.12" lengthAdjust="spacingAndGlyphs">B</tspan><tspan x="822.4">8</tspan></text>
<text y="460.46" font-size="8.9" fill="#808080" class="t" text-anchor="middle" stroke="#808080" stroke-width="0.28"><tspan x="790.9 795.4 799.9 804.4">0012</tspan><tspan x="808.9" textLength="4.12" lengthAdjust="spacingAndGlyphs">F</tspan><tspan x="813.4" textLength="4.12" lengthAdjust="spacingAndGlyphs">E</tspan><tspan x="817.9" textLength="4.12" lengthAdjust="spacingAndGlyphs">B</tspan><tspan x="822.4" textLength="4.12" lengthAdjust="spacingAndGlyphs">C</tspan></text>
<text y="469.43" font-size="8.9" fill="#808080" class="t" text-anchor="middle" stroke="#808080" stroke-width="0.28"><tspan x="790.9 795.4 799.9 804.4">0012</tspan><tspan x="808.9" textLength="4.12" lengthAdjust="spacingAndGlyphs">F</tspan><tspan x="813.4" textLength="4.12" lengthAdjust="spacingAndGlyphs">E</tspan><tspan x="817.9" textLength="4.12" lengthAdjust="spacingAndGlyphs">C</tspan><tspan x="822.4">0</tspan></text>
<text y="478.4" font-size="8.9" fill="#808080" class="t" text-anchor="middle" stroke="#808080" stroke-width="0.28"><tspan x="790.9 795.4 799.9 804.4">0012</tspan><tspan x="808.9" textLength="4.12" lengthAdjust="spacingAndGlyphs">F</tspan><tspan x="813.4" textLength="4.12" lengthAdjust="spacingAndGlyphs">E</tspan><tspan x="817.9" textLength="4.12" lengthAdjust="spacingAndGlyphs">C</tspan><tspan x="822.4">4</tspan></text>
<text y="487.37" font-size="8.9" fill="#808080" class="t" text-anchor="middle" stroke="#808080" stroke-width="0.28"><tspan x="790.9 795.4 799.9 804.4">0012</tspan><tspan x="808.9" textLength="4.12" lengthAdjust="spacingAndGlyphs">F</tspan><tspan x="813.4" textLength="4.12" lengthAdjust="spacingAndGlyphs">E</tspan><tspan x="817.9" textLength="4.12" lengthAdjust="spacingAndGlyphs">C</tspan><tspan x="822.4">8</tspan></text>
<text y="496.34" font-size="8.9" fill="#808080" class="t" text-anchor="middle" stroke="#808080" stroke-width="0.28"><tspan x="790.9 795.4 799.9 804.4">0012</tspan><tspan x="808.9" textLength="4.12" lengthAdjust="spacingAndGlyphs">F</tspan><tspan x="813.4" textLength="4.12" lengthAdjust="spacingAndGlyphs">E</tspan><tspan x="817.9" textLength="4.12" lengthAdjust="spacingAndGlyphs">C</tspan><tspan x="822.4" textLength="4.12" lengthAdjust="spacingAndGlyphs">C</tspan></text>
<text y="505.31" font-size="8.9" fill="#808080" class="t" text-anchor="middle" stroke="#808080" stroke-width="0.28"><tspan x="790.9 795.4 799.9 804.4">0012</tspan><tspan x="808.9" textLength="4.12" lengthAdjust="spacingAndGlyphs">F</tspan><tspan x="813.4" textLength="4.12" lengthAdjust="spacingAndGlyphs">E</tspan><tspan x="817.9" textLength="4.12" lengthAdjust="spacingAndGlyphs">D</tspan><tspan x="822.4">0</tspan></text>
<text y="514.28" font-size="8.9" fill="#808080" class="t" text-anchor="middle" stroke="#808080" stroke-width="0.28"><tspan x="790.9 795.4 799.9 804.4">0012</tspan><tspan x="808.9" textLength="4.12" lengthAdjust="spacingAndGlyphs">F</tspan><tspan x="813.4" textLength="4.12" lengthAdjust="spacingAndGlyphs">E</tspan><tspan x="817.9" textLength="4.12" lengthAdjust="spacingAndGlyphs">D</tspan><tspan x="822.4">4</tspan></text>
<text y="523.25" font-size="8.9" fill="#808080" class="t" text-anchor="middle" stroke="#808080" stroke-width="0.28"><tspan x="790.9 795.4 799.9 804.4">0012</tspan><tspan x="808.9" textLength="4.12" lengthAdjust="spacingAndGlyphs">F</tspan><tspan x="813.4" textLength="4.12" lengthAdjust="spacingAndGlyphs">E</tspan><tspan x="817.9" textLength="4.12" lengthAdjust="spacingAndGlyphs">D</tspan><tspan x="822.4">8</tspan></text>
<text y="532.22" font-size="8.9" fill="#808080" class="t" text-anchor="middle" stroke="#808080" stroke-width="0.28"><tspan x="790.9 795.4 799.9 804.4">0012</tspan><tspan x="808.9" textLength="4.12" lengthAdjust="spacingAndGlyphs">F</tspan><tspan x="813.4" textLength="4.12" lengthAdjust="spacingAndGlyphs">E</tspan><tspan x="817.9" textLength="4.12" lengthAdjust="spacingAndGlyphs">D</tspan><tspan x="822.4" textLength="4.12" lengthAdjust="spacingAndGlyphs">C</tspan></text>
<text y="541.19" font-size="8.9" fill="#808080" class="t" text-anchor="middle" stroke="#808080" stroke-width="0.28"><tspan x="790.9 795.4 799.9 804.4">0012</tspan><tspan x="808.9" textLength="4.12" lengthAdjust="spacingAndGlyphs">F</tspan><tspan x="813.4" textLength="4.12" lengthAdjust="spacingAndGlyphs">E</tspan><tspan x="817.9" textLength="4.12" lengthAdjust="spacingAndGlyphs">E</tspan><tspan x="822.4">0</tspan></text>
<text y="550.16" font-size="8.9" fill="#808080" class="t" text-anchor="middle" stroke="#808080" stroke-width="0.28"><tspan x="790.9 795.4 799.9 804.4">0012</tspan><tspan x="808.9" textLength="4.12" lengthAdjust="spacingAndGlyphs">F</tspan><tspan x="813.4" textLength="4.12" lengthAdjust="spacingAndGlyphs">E</tspan><tspan x="817.9" textLength="4.12" lengthAdjust="spacingAndGlyphs">E</tspan><tspan x="822.4">4</tspan></text>
<text y="559.13" font-size="8.9" fill="#808080" class="t" text-anchor="middle" stroke="#808080" stroke-width="0.28"><tspan x="790.9 795.4 799.9 804.4">0012</tspan><tspan x="808.9" textLength="4.12" lengthAdjust="spacingAndGlyphs">F</tspan><tspan x="813.4" textLength="4.12" lengthAdjust="spacingAndGlyphs">E</tspan><tspan x="817.9" textLength="4.12" lengthAdjust="spacingAndGlyphs">E</tspan><tspan x="822.4">8</tspan></text>
<text y="568.1" font-size="8.9" fill="#808080" class="t" text-anchor="middle" stroke="#808080" stroke-width="0.28"><tspan x="790.9 795.4 799.9 804.4">0012</tspan><tspan x="808.9" textLength="4.12" lengthAdjust="spacingAndGlyphs">F</tspan><tspan x="813.4" textLength="4.12" lengthAdjust="spacingAndGlyphs">E</tspan><tspan x="817.9" textLength="4.12" lengthAdjust="spacingAndGlyphs">E</tspan><tspan x="822.4" textLength="4.12" lengthAdjust="spacingAndGlyphs">C</tspan></text>
<text y="534.9" font-size="8.9" fill="#808080" class="t" text-anchor="middle" stroke="#808080" stroke-width="0.28"><tspan x="208.0 212.5 217.0 221.5 226.0 230.5">004240</tspan><tspan x="235.0" textLength="4.12" lengthAdjust="spacingAndGlyphs">F</tspan><tspan x="239.5">0</tspan></text>
<text y="534.9" font-size="8.9" fill="#787878" class="t" text-anchor="middle" stroke="#787878" stroke-width="0.28"><tspan x="248.7 253.2 257.7 262.2 266.7 271.2 275.7 280.2 284.7 289.2 293.7">00 00 00 00</tspan></text>
<text y="534.9" font-size="8.9" fill="#787878" class="t" text-anchor="middle" stroke="#787878" stroke-width="0.28"><tspan x="302.7 307.2 311.7 316.2 320.7 325.2 329.7 334.2 338.7 343.2 347.7">00 00 00 00</tspan></text>
<text y="534.9" font-size="8.9" fill="#787878" class="t" text-anchor="middle" stroke="#787878" stroke-width="0.28"><tspan x="356.7 361.2 365.7 370.2 374.7 379.2 383.7 388.2 392.7 397.2 401.7">00 00 00 00</tspan></text>
<text y="534.9" font-size="8.9" fill="#787878" class="t" text-anchor="middle" stroke="#787878" stroke-width="0.28"><tspan x="410.7 415.2 419.7 424.2 428.7 433.2 437.7 442.2 446.7 451.2 455.7">00 00 00 00</tspan></text>
<text y="535.3" font-size="8.9" fill="#9a9a9a" class="t" text-anchor="middle" stroke="#9a9a9a" stroke-width="0.28"><tspan x="464.0 468.5 473.0 477.5 482.0 486.5 491.0 495.5 500.0 504.5 509.0 513.5 518.0 522.5 527.0 531.5">................</tspan></text>
<text y="543.87" font-size="8.9" fill="#808080" class="t" text-anchor="middle" stroke="#808080" stroke-width="0.28"><tspan x="208.0 212.5 217.0 221.5 226.0 230.5 235.0 239.5">00424100</tspan></text>
<text y="543.87" font-size="8.9" fill="#787878" class="t" text-anchor="middle" stroke="#787878" stroke-width="0.28"><tspan x="248.7 253.2 257.7 262.2 266.7 271.2 275.7 280.2 284.7 289.2 293.7">00 00 00 00</tspan></text>
<text y="543.87" font-size="8.9" fill="#787878" class="t" text-anchor="middle" stroke="#787878" stroke-width="0.28"><tspan x="302.7 307.2 311.7 316.2 320.7 325.2 329.7 334.2 338.7 343.2 347.7">00 00 00 00</tspan></text>
<text y="543.87" font-size="8.9" fill="#787878" class="t" text-anchor="middle" stroke="#787878" stroke-width="0.28"><tspan x="356.7 361.2 365.7 370.2 374.7 379.2 383.7 388.2 392.7 397.2 401.7">00 00 00 00</tspan></text>
<text y="543.87" font-size="8.9" fill="#787878" class="t" text-anchor="middle" stroke="#787878" stroke-width="0.28"><tspan x="410.7 415.2 419.7 424.2 428.7 433.2 437.7 442.2 446.7 451.2 455.7">00 00 00 00</tspan></text>
<text y="544.27" font-size="8.9" fill="#9a9a9a" class="t" text-anchor="middle" stroke="#9a9a9a" stroke-width="0.28"><tspan x="464.0 468.5 473.0 477.5 482.0 486.5 491.0 495.5 500.0 504.5 509.0 513.5 518.0 522.5 527.0 531.5">................</tspan></text>
<text y="552.84" font-size="8.9" fill="#808080" class="t" text-anchor="middle" stroke="#808080" stroke-width="0.28"><tspan x="208.0 212.5 217.0 221.5 226.0 230.5 235.0 239.5">00424110</tspan></text>
<text y="552.84" font-size="8.9" fill="#787878" class="t" text-anchor="middle" stroke="#787878" stroke-width="0.28"><tspan x="248.7 253.2 257.7 262.2 266.7 271.2 275.7 280.2 284.7 289.2 293.7">00 00 00 00</tspan></text>
<text y="552.84" font-size="8.9" fill="#787878" class="t" text-anchor="middle" stroke="#787878" stroke-width="0.28"><tspan x="302.7 307.2 311.7 316.2 320.7 325.2 329.7 334.2 338.7 343.2 347.7">00 00 00 00</tspan></text>
<text y="552.84" font-size="8.9" fill="#787878" class="t" text-anchor="middle" stroke="#787878" stroke-width="0.28"><tspan x="356.7 361.2 365.7 370.2 374.7 379.2 383.7 388.2 392.7 397.2 401.7">00 00 00 00</tspan></text>
<text y="552.84" font-size="8.9" fill="#787878" class="t" text-anchor="middle" stroke="#787878" stroke-width="0.28"><tspan x="410.7 415.2 419.7 424.2 428.7 433.2 437.7 442.2 446.7 451.2 455.7">00 00 00 00</tspan></text>
<text y="553.24" font-size="8.9" fill="#9a9a9a" class="t" text-anchor="middle" stroke="#9a9a9a" stroke-width="0.28"><tspan x="464.0 468.5 473.0 477.5 482.0 486.5 491.0 495.5 500.0 504.5 509.0 513.5 518.0 522.5 527.0 531.5">................</tspan></text>
<text y="561.81" font-size="8.9" fill="#808080" class="t" text-anchor="middle" stroke="#808080" stroke-width="0.28"><tspan x="208.0 212.5 217.0 221.5 226.0 230.5 235.0 239.5">00424120</tspan></text>
<text y="561.81" font-size="8.9" fill="#787878" class="t" text-anchor="middle" stroke="#787878" stroke-width="0.28"><tspan x="248.7 253.2 257.7 262.2 266.7 271.2 275.7 280.2 284.7 289.2 293.7">00 00 00 00</tspan></text>
<text y="561.81" font-size="8.9" fill="#787878" class="t" text-anchor="middle" stroke="#787878" stroke-width="0.28"><tspan x="302.7 307.2 311.7 316.2 320.7 325.2 329.7 334.2 338.7 343.2 347.7">00 00 00 00</tspan></text>
<text y="561.81" font-size="8.9" fill="#787878" class="t" text-anchor="middle" stroke="#787878" stroke-width="0.28"><tspan x="356.7 361.2 365.7 370.2 374.7 379.2 383.7 388.2 392.7 397.2 401.7">00 00 00 00</tspan></text>
<text y="561.81" font-size="8.9" fill="#787878" class="t" text-anchor="middle" stroke="#787878" stroke-width="0.28"><tspan x="410.7 415.2 419.7 424.2 428.7 433.2 437.7 442.2 446.7 451.2 455.7">00 00 00 00</tspan></text>
<text y="562.21" font-size="8.9" fill="#9a9a9a" class="t" text-anchor="middle" stroke="#9a9a9a" stroke-width="0.28"><tspan x="464.0 468.5 473.0 477.5 482.0 486.5 491.0 495.5 500.0 504.5 509.0 513.5 518.0 522.5 527.0 531.5">................</tspan></text>
<rect x="244.05" y="392.5" width="0.9" height="180" fill="#606060"/>
<rect x="298.05" y="392.5" width="0.9" height="180" fill="#606060"/>
<rect x="352.05" y="392.5" width="0.9" height="180" fill="#606060"/>
<rect x="406.05" y="392.5" width="0.9" height="180" fill="#606060"/>
<rect x="460.05" y="392.5" width="0.9" height="180" fill="#606060"/>
<rect x="536.1" y="392.5" width="0.9" height="180" fill="#606060"/>
<rect x="32" y="222" width="626" height="307.4" fill="#d4d0c8"/>
<rect x="32.7" y="222.7" width="624.6" height="1.4" fill="#fbfbfb"/>
<rect x="32.7" y="222.7" width="1.4" height="306" fill="#fbfbfb"/>
<rect x="32" y="528.6" width="626" height="0.8" fill="#404040"/>
<rect x="657.2" y="222" width="0.8" height="307.4" fill="#404040"/>
<rect x="32.8" y="527.8" width="624.4" height="0.8" fill="#808080"/>
<rect x="656.4" y="222.8" width="0.8" height="305.8" fill="#808080"/>
<rect x="35" y="225.1" width="619" height="18.7" fill="url(#gn)"/>
<path d="M51 227.6 L52.3 227.6 L52.3 241.4 L42.3 241.4 L42.3 237.6 L47.6 237.6 Z" fill="#dff3f3"/>
<path d="M43 239.3 H51.6 M43 240.6 H51.6" stroke="#9ccaca" stroke-width="0.5"/>
<path d="M41.2 226.6 L51.7 226.6 L47.7 237.3 L37.2 237.3 Z" fill="url(#np)"/>
<path d="M37.4 237.9 L47.9 237.9 L49.3 234" stroke="#081838" stroke-width="1" fill="none"/>
<path d="M42.6 230.3 H47" stroke="#081020" stroke-width="1.1"/>
<path d="M42.2 226.3 h0.7 M43.8 226.3 h0.7 M45.4 226.3 h0.7 M47 226.3 h0.7 M48.6 226.3 h0.7 M50.2 226.3 h0.7" stroke="#fff" stroke-width="1"/>
<text y="239.8" font-size="15" fill="#fff" class="sb"><tspan x="55.2" textLength="92.4" lengthAdjust="spacingAndGlyphs" stroke="#fff" stroke-width="0.25">shellcode.txt</tspan><tspan x="149"> - </tspan><tspan x="165.7" y="239.4" class="cs" font-size="13.9">记事本</tspan></text>
<rect x="603" y="226.2" width="15.6" height="14.8" fill="#d4d0c8"/>
<rect x="603" y="226.2" width="15.6" height="0.8" fill="#fff"/>
<rect x="603" y="226.2" width="0.8" height="14.8" fill="#fff"/>
<rect x="603" y="240.1" width="15.6" height="0.9" fill="#404040"/>
<rect x="617.7" y="226.2" width="0.9" height="14.8" fill="#404040"/>
<rect x="603.9" y="239.3" width="13.8" height="0.8" fill="#808080"/>
<rect x="616.9" y="227.1" width="0.8" height="13" fill="#808080"/>
<rect x="606.4" y="236.4" width="6" height="1.6" fill="#000"/>
<rect x="618.8" y="226.2" width="15.6" height="14.8" fill="#d4d0c8"/>
<rect x="618.8" y="226.2" width="15.6" height="0.8" fill="#fff"/>
<rect x="618.8" y="226.2" width="0.8" height="14.8" fill="#fff"/>
<rect x="618.8" y="240.1" width="15.6" height="0.9" fill="#404040"/>
<rect x="633.5" y="226.2" width="0.9" height="14.8" fill="#404040"/>
<rect x="619.7" y="239.3" width="13.8" height="0.8" fill="#808080"/>
<rect x="632.7" y="227.1" width="0.8" height="13" fill="#808080"/>
<rect x="622.1" y="229.4" width="8.4" height="7.8" fill="none" stroke="#000" stroke-width="0.9"/>
<rect x="621.7" y="229" width="9.2" height="1.6" fill="#000"/>
<rect x="637.4" y="226.2" width="15.6" height="14.8" fill="#d4d0c8"/>
<rect x="637.4" y="226.2" width="15.6" height="0.8" fill="#fff"/>
<rect x="637.4" y="226.2" width="0.8" height="14.8" fill="#fff"/>
<rect x="637.4" y="240.1" width="15.6" height="0.9" fill="#404040"/>
<rect x="652.1" y="226.2" width="0.9" height="14.8" fill="#404040"/>
<rect x="638.3" y="239.3" width="13.8" height="0.8" fill="#808080"/>
<rect x="651.3" y="227.1" width="0.8" height="13" fill="#808080"/>
<path d="M641 229.6 L648.6 237.2 M648.6 229.6 L641 237.2" stroke="#000" stroke-width="1.5" fill="none"/>
<rect x="35" y="243.8" width="619" height="17.4" fill="#d4d0c8"/>
<text y="256.4" font-size="11.5" fill="#2a2a2a" class="cg"><tspan x="41.6">文件</tspan><tspan x="65.2">(</tspan><tspan x="69.2" text-decoration="underline">F</tspan><tspan x="77">)</tspan></text>
<text y="256.4" font-size="11.5" fill="#2a2a2a" class="cg"><tspan x="95.1">编辑</tspan><tspan x="118.7">(</tspan><tspan x="122.7" text-decoration="underline">E</tspan><tspan x="130.5">)</tspan></text>
<text y="256.4" font-size="11.5" fill="#2a2a2a" class="cg"><tspan x="147.9">格式</tspan><tspan x="171.5">(</tspan><tspan x="175.5" text-decoration="underline">O</tspan><tspan x="184.5">)</tspan></text>
<text y="256.4" font-size="11.5" fill="#2a2a2a" class="cg"><tspan x="204">帮助</tspan><tspan x="227.6">(</tspan><tspan x="231.6" text-decoration="underline">H</tspan><tspan x="239.4">)</tspan></text>
<rect x="35.2" y="261.2" width="618.6" height="265.5" fill="#fff"/>
<rect x="35.2" y="261.2" width="618.6" height="0.9" fill="#808080"/>
<rect x="35.2" y="261.2" width="0.9" height="265.5" fill="#808080"/>
<rect x="36.1" y="262.1" width="617" height="0.9" fill="#404040"/>
<rect x="36.1" y="262.1" width="0.9" height="263.8" fill="#404040"/>
<rect x="638" y="262.6" width="15.6" height="247.8" fill="url(#dith2)"/>
<rect x="638" y="262.6" width="15.6" height="14.6" fill="#d4d0c8"/>
<rect x="638" y="262.6" width="15.6" height="0.8" fill="#fff"/>
<rect x="638" y="262.6" width="0.8" height="14.6" fill="#fff"/>
<rect x="638" y="276.3" width="15.6" height="0.9" fill="#404040"/>
<rect x="652.7" y="262.6" width="0.9" height="14.6" fill="#404040"/>
<rect x="638.9" y="275.5" width="13.8" height="0.8" fill="#808080"/>
<rect x="651.9" y="263.5" width="0.8" height="12.8" fill="#808080"/>
<path d="M643.2 272 L648.4 272 L645.8 268.8 Z" fill="#808080"/>
<rect x="638" y="495.4" width="15.6" height="14.9" fill="#d4d0c8"/>
<rect x="638" y="495.4" width="15.6" height="0.8" fill="#fff"/>
<rect x="638" y="495.4" width="0.8" height="14.9" fill="#fff"/>
<rect x="638" y="509.4" width="15.6" height="0.9" fill="#404040"/>
<rect x="652.7" y="495.4" width="0.9" height="14.9" fill="#404040"/>
<rect x="638.9" y="508.6" width="13.8" height="0.8" fill="#808080"/>
<rect x="651.9" y="496.3" width="0.8" height="13.1" fill="#808080"/>
<path d="M643.2 501.3 L648.4 501.3 L645.8 504.3 Z" fill="#808080"/>
<rect x="36.6" y="510.3" width="601.4" height="15.6" fill="url(#dith2)"/>
<rect x="36.6" y="510.3" width="15.4" height="15.6" fill="#d4d0c8"/>
<rect x="36.6" y="510.3" width="15.4" height="0.8" fill="#fff"/>
<rect x="36.6" y="510.3" width="0.8" height="15.6" fill="#fff"/>
<rect x="36.6" y="525" width="15.4" height="0.9" fill="#404040"/>
<rect x="51.1" y="510.3" width="0.9" height="15.6" fill="#404040"/>
<rect x="37.5" y="524.2" width="13.6" height="0.8" fill="#808080"/>
<rect x="50.3" y="511.2" width="0.8" height="13.8" fill="#808080"/>
<path d="M45.4 515.3 L45.4 520.9 L42.4 518.1 Z" fill="#808080"/>
<rect x="622.4" y="510.3" width="15.6" height="15.6" fill="#d4d0c8"/>
<rect x="622.4" y="510.3" width="15.6" height="0.8" fill="#fff"/>
<rect x="622.4" y="510.3" width="0.8" height="15.6" fill="#fff"/>
<rect x="622.4" y="525" width="15.6" height="0.9" fill="#404040"/>
<rect x="637.1" y="510.3" width="0.9" height="15.6" fill="#404040"/>
<rect x="623.3" y="524.2" width="13.8" height="0.8" fill="#808080"/>
<rect x="636.3" y="511.2" width="0.8" height="13.8" fill="#808080"/>
<path d="M629 515.3 L629 520.9 L632 518.1 Z" fill="#808080"/>
<rect x="638" y="510.3" width="15.8" height="15.7" fill="#d4d0c8"/>
<path d="M652.8 514.6 L642.8 524.8 M652.8 518.4 L646.4 524.8 M652.8 522 L650 524.8" stroke="#808080" stroke-width="1.4"/>
<path d="M652.8 515.8 L643.8 524.8 M652.8 519.4 L647.4 524.8" stroke="#fff" stroke-width="0.6"/>
<text x="37.9" y="272.5" font-size="9.8" fill="#000" class="mb" textLength="226.48" lengthAdjust="spacingAndGlyphs">11111111111111111111111111111111111111</text>
<text x="37.9" y="284.38" font-size="9.8" fill="#000" class="mb" textLength="226.48" lengthAdjust="spacingAndGlyphs">22222222222222222222222222222222222222</text>
<text x="37.9" y="296.26" font-size="9.8" fill="#000" class="mb" textLength="226.48" lengthAdjust="spacingAndGlyphs">33333333333333333333333333333333333333</text>
<text x="37.9" y="308.14" font-size="9.8" fill="#000" class="mb" textLength="226.48" lengthAdjust="spacingAndGlyphs">44444444444444444444444444444444444444</text>
<text x="37.9" y="320.02" font-size="9.8" fill="#000" class="mb" textLength="226.48" lengthAdjust="spacingAndGlyphs">55555555555555555555555555555555555555</text>
<text x="37.9" y="331.9" font-size="9.8" fill="#000" class="mb" textLength="226.48" lengthAdjust="spacingAndGlyphs">66666666666666666666666666666666666666</text>
</g>
</svg>
</body></html>
